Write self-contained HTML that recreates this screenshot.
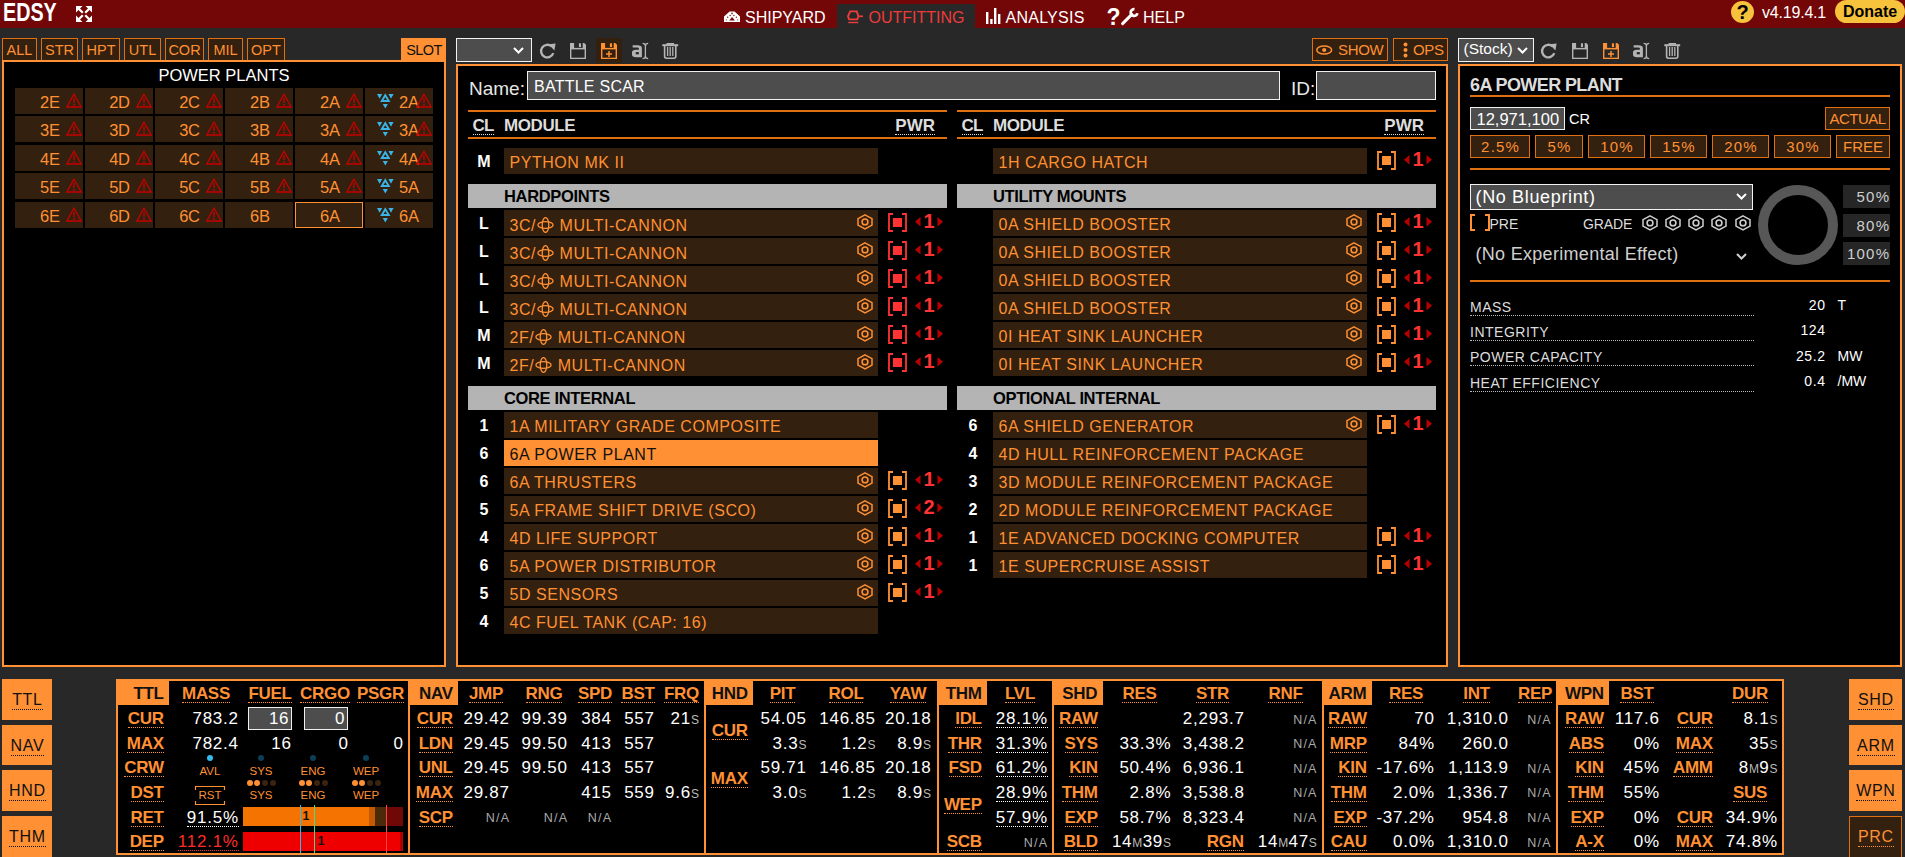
<!DOCTYPE html>
<html><head><meta charset="utf-8"><title>EDSY</title>
<style>
html,body{margin:0;padding:0;}
body{width:1905px;height:857px;overflow:hidden;position:relative;background:#282828;font-family:"Liberation Sans", sans-serif;}
.a{position:absolute;}
.t{white-space:nowrap;}
svg.a{overflow:visible;}
</style></head><body>
<div class="a" style="left:0px;top:0px;width:1905px;height:28px;background:#730606;"></div>
<div class="a t" style="left:2.5px;top:0px;font-size:25px;line-height:25px;font-weight:700;color:#fff;transform:scaleX(0.79);transform-origin:0 0;">EDSY</div>
<svg class="a" style="left:76px;top:6px;" width="16" height="16" viewBox="0 0 16 16"><g fill="#fff"><path d="M0 0 L6.5 0 L0 6.5 Z M16 0 L9.5 0 L16 6.5 Z M0 16 L6.5 16 L0 9.5 Z M16 16 L9.5 16 L16 9.5 Z"/></g><g stroke="#fff" stroke-width="2.3"><path d="M2 2 L6.8 6.8 M14 2 L9.2 6.8 M2 14 L6.8 9.2 M14 14 L9.2 9.2"/></g></svg>
<div class="a" style="left:837px;top:4px;width:138px;height:24px;background:#282828;"></div>
<svg class="a" style="left:724px;top:11px;" width="16" height="11" viewBox="0 0 16 11"><path d="M5.6 0.5 L10.6 0.5 L16 5.6 L16 11 L0 11 L0 5.6 Z" fill="#fff"/><path d="M8.1 6 L10.9 9.6 L5.3 9.6 Z" fill="#730606"/><g fill="#8a3030"><circle cx="8" cy="2.4" r="0.9"/><circle cx="6.2" cy="4.5" r="0.8"/><circle cx="9.9" cy="4.5" r="0.8"/><circle cx="3.6" cy="6.3" r="0.8"/><circle cx="12.4" cy="6.3" r="0.8"/><circle cx="2.3" cy="8.8" r="0.6"/><circle cx="13.7" cy="8.8" r="0.6"/></g></svg>
<div class="a t" style="top:10px;font-size:16px;line-height:16px;color:#fff;left:745px;">SHIPYARD</div>
<svg class="a" style="left:846px;top:9px;" width="18" height="15" viewBox="0 0 18 15"><path d="M4.2 2.4 L10.8 2.4 L12.4 7.3 L11.3 10.4 L3.1 10.4 L2 7.3 Z" fill="none" stroke="#ee3b3b" stroke-width="1.9" stroke-linejoin="miter"/><path d="M12.5 7.3 L17 7.3" stroke="#ee3b3b" stroke-width="1.7"/><path d="M2.3 13.5 L12.3 13.5" stroke="#ee3b3b" stroke-width="1.4"/></svg>
<div class="a t" style="top:10px;font-size:16px;line-height:16px;color:#ee3b3b;left:868.5px;">OUTFITTING</div>
<svg class="a" style="left:986px;top:7px;" width="15" height="17" viewBox="0 0 15 17"><g fill="#fff"><rect x="0" y="5" width="2.4" height="12"/><rect x="4.2" y="12" width="2.4" height="5"/><rect x="8" y="1" width="2.4" height="16"/><rect x="12" y="7" width="2.4" height="10"/></g></svg>
<div class="a t" style="top:10px;font-size:16px;line-height:16px;color:#fff;letter-spacing:0.25px;left:1005.5px;">ANALYSIS</div>
<div class="a t" style="top:6px;font-size:23px;line-height:23px;color:#fff;font-weight:700;left:1106.5px;">?</div>
<svg class="a" style="left:1119.5px;top:8px;" width="19" height="18" viewBox="0 0 19 18"><path d="M2.6 15.6 L11.8 6.4" stroke="#fff" stroke-width="3" stroke-linecap="round"/><path d="M17.4 5.2 A3.4 3.4 0 1 1 14.5 1.1" fill="none" stroke="#fff" stroke-width="2.7"/></svg>
<div class="a t" style="top:10px;font-size:16px;line-height:16px;color:#fff;left:1143px;">HELP</div>
<div class="a" style="left:1731px;top:1px;width:23px;height:22px;border-radius:50%;background:#f7c23c;"></div>
<div class="a t" style="top:2px;font-size:20px;line-height:20px;color:#000;font-weight:700;left:1442.5px;width:600px;text-align:center;">?</div>
<div class="a t" style="top:5px;font-size:16px;line-height:16px;color:#fff;letter-spacing:-0.2px;left:1762px;">v4.19.4.1</div>
<div class="a" style="left:1835px;top:0px;width:70px;height:23px;border-radius:11.5px;background:#f7c23c;"></div>
<div class="a t" style="top:4px;font-size:16px;line-height:16px;color:#000;font-weight:700;left:1843px;">Donate</div>
<div class="a" style="left:2px;top:38px;width:35px;height:23px;background:#33200e;border:1px solid #e0700f;box-sizing:border-box;"></div>
<div class="a t" style="top:43px;font-size:14.5px;line-height:14.5px;color:#ff9033;left:-280.5px;width:600px;text-align:center;">ALL</div>
<div class="a" style="left:41px;top:38px;width:37px;height:23px;background:#33200e;border:1px solid #e0700f;box-sizing:border-box;"></div>
<div class="a t" style="top:43px;font-size:14.5px;line-height:14.5px;color:#ff9033;left:-240.5px;width:600px;text-align:center;">STR</div>
<div class="a" style="left:82px;top:38px;width:38px;height:23px;background:#33200e;border:1px solid #e0700f;box-sizing:border-box;"></div>
<div class="a t" style="top:43px;font-size:14.5px;line-height:14.5px;color:#ff9033;left:-199.0px;width:600px;text-align:center;">HPT</div>
<div class="a" style="left:124px;top:38px;width:37px;height:23px;background:#33200e;border:1px solid #e0700f;box-sizing:border-box;"></div>
<div class="a t" style="top:43px;font-size:14.5px;line-height:14.5px;color:#ff9033;left:-157.5px;width:600px;text-align:center;">UTL</div>
<div class="a" style="left:165px;top:38px;width:39px;height:23px;background:#33200e;border:1px solid #e0700f;box-sizing:border-box;"></div>
<div class="a t" style="top:43px;font-size:14.5px;line-height:14.5px;color:#ff9033;left:-115.5px;width:600px;text-align:center;">COR</div>
<div class="a" style="left:208px;top:38px;width:35px;height:23px;background:#33200e;border:1px solid #e0700f;box-sizing:border-box;"></div>
<div class="a t" style="top:43px;font-size:14.5px;line-height:14.5px;color:#ff9033;left:-74.5px;width:600px;text-align:center;">MIL</div>
<div class="a" style="left:247px;top:38px;width:38px;height:23px;background:#33200e;border:1px solid #e0700f;box-sizing:border-box;"></div>
<div class="a t" style="top:43px;font-size:14.5px;line-height:14.5px;color:#ff9033;left:-34.0px;width:600px;text-align:center;">OPT</div>
<div class="a" style="left:401px;top:38px;width:45px;height:24px;background:#ff9033;"></div>
<div class="a t" style="top:43px;font-size:14.5px;line-height:14.5px;color:#111;letter-spacing:-0.6px;left:124px;width:600px;text-align:center;">SLOT</div>
<div class="a" style="left:2px;top:60px;width:444px;height:607px;background:#000;border:2px solid #ff9033;box-sizing:border-box;"></div>
<div class="a t" style="top:67px;font-size:16.5px;line-height:16.5px;color:#fff;left:-76px;width:600px;text-align:center;">POWER PLANTS</div>
<div class="a" style="left:15px;top:88px;width:68px;height:26px;background:#33200e;"></div>
<div class="a t" style="top:94px;font-size:16.5px;line-height:16.5px;color:#ff9033;letter-spacing:-0.3px;right:1845.30px;text-align:right;">2E</div>
<svg class="a" style="left:66px;top:93px;" width="16" height="15" viewBox="0 0 16 15"><path d="M8 1.2 L15.2 14 L0.8 14 Z" fill="none" stroke="#c80000" stroke-width="1.3" stroke-linejoin="miter"/><rect x="7.3" y="5" width="1.4" height="5" fill="#c80000"/><rect x="7.2" y="11" width="1.6" height="1.6" fill="#c80000"/></svg>
<div class="a" style="left:85px;top:88px;width:68px;height:26px;background:#33200e;"></div>
<div class="a t" style="top:94px;font-size:16.5px;line-height:16.5px;color:#ff9033;letter-spacing:-0.3px;right:1775.30px;text-align:right;">2D</div>
<svg class="a" style="left:136px;top:93px;" width="16" height="15" viewBox="0 0 16 15"><path d="M8 1.2 L15.2 14 L0.8 14 Z" fill="none" stroke="#c80000" stroke-width="1.3" stroke-linejoin="miter"/><rect x="7.3" y="5" width="1.4" height="5" fill="#c80000"/><rect x="7.2" y="11" width="1.6" height="1.6" fill="#c80000"/></svg>
<div class="a" style="left:155px;top:88px;width:68px;height:26px;background:#33200e;"></div>
<div class="a t" style="top:94px;font-size:16.5px;line-height:16.5px;color:#ff9033;letter-spacing:-0.3px;right:1705.30px;text-align:right;">2C</div>
<svg class="a" style="left:206px;top:93px;" width="16" height="15" viewBox="0 0 16 15"><path d="M8 1.2 L15.2 14 L0.8 14 Z" fill="none" stroke="#c80000" stroke-width="1.3" stroke-linejoin="miter"/><rect x="7.3" y="5" width="1.4" height="5" fill="#c80000"/><rect x="7.2" y="11" width="1.6" height="1.6" fill="#c80000"/></svg>
<div class="a" style="left:225px;top:88px;width:68px;height:26px;background:#33200e;"></div>
<div class="a t" style="top:94px;font-size:16.5px;line-height:16.5px;color:#ff9033;letter-spacing:-0.3px;right:1635.30px;text-align:right;">2B</div>
<svg class="a" style="left:276px;top:93px;" width="16" height="15" viewBox="0 0 16 15"><path d="M8 1.2 L15.2 14 L0.8 14 Z" fill="none" stroke="#c80000" stroke-width="1.3" stroke-linejoin="miter"/><rect x="7.3" y="5" width="1.4" height="5" fill="#c80000"/><rect x="7.2" y="11" width="1.6" height="1.6" fill="#c80000"/></svg>
<div class="a" style="left:295px;top:88px;width:68px;height:26px;background:#33200e;"></div>
<div class="a t" style="top:94px;font-size:16.5px;line-height:16.5px;color:#ff9033;letter-spacing:-0.3px;right:1565.30px;text-align:right;">2A</div>
<svg class="a" style="left:346px;top:93px;" width="16" height="15" viewBox="0 0 16 15"><path d="M8 1.2 L15.2 14 L0.8 14 Z" fill="none" stroke="#c80000" stroke-width="1.3" stroke-linejoin="miter"/><rect x="7.3" y="5" width="1.4" height="5" fill="#c80000"/><rect x="7.2" y="11" width="1.6" height="1.6" fill="#c80000"/></svg>
<div class="a" style="left:365px;top:88px;width:68px;height:26px;background:#33200e;"></div>
<svg class="a" style="left:377px;top:94px;" width="17" height="15" viewBox="0 0 17 15"><path d="M0 0 L5.2 0 L2.6 4.8 Z M11.4 0 L16.6 0 L14 4.8 Z M5.7 10 L10.9 10 L8.3 14.5 Z" fill="#3ab4e6"/><path d="M8.3 1.2 L11.8 7 L4.8 7 Z" fill="none" stroke="#3ab4e6" stroke-width="1.9" stroke-linejoin="miter"/></svg>
<div class="a t" style="top:94px;font-size:16.5px;line-height:16.5px;color:#ff9033;letter-spacing:-0.3px;left:399px;">2A</div>
<svg class="a" style="left:416px;top:93px;" width="16" height="15" viewBox="0 0 16 15"><path d="M8 1.2 L15.2 14 L0.8 14 Z" fill="none" stroke="#c80000" stroke-width="1.3" stroke-linejoin="miter"/><rect x="7.3" y="5" width="1.4" height="5" fill="#c80000"/><rect x="7.2" y="11" width="1.6" height="1.6" fill="#c80000"/></svg>
<div class="a" style="left:15px;top:116px;width:68px;height:26px;background:#33200e;"></div>
<div class="a t" style="top:122px;font-size:16.5px;line-height:16.5px;color:#ff9033;letter-spacing:-0.3px;right:1845.30px;text-align:right;">3E</div>
<svg class="a" style="left:66px;top:121px;" width="16" height="15" viewBox="0 0 16 15"><path d="M8 1.2 L15.2 14 L0.8 14 Z" fill="none" stroke="#c80000" stroke-width="1.3" stroke-linejoin="miter"/><rect x="7.3" y="5" width="1.4" height="5" fill="#c80000"/><rect x="7.2" y="11" width="1.6" height="1.6" fill="#c80000"/></svg>
<div class="a" style="left:85px;top:116px;width:68px;height:26px;background:#33200e;"></div>
<div class="a t" style="top:122px;font-size:16.5px;line-height:16.5px;color:#ff9033;letter-spacing:-0.3px;right:1775.30px;text-align:right;">3D</div>
<svg class="a" style="left:136px;top:121px;" width="16" height="15" viewBox="0 0 16 15"><path d="M8 1.2 L15.2 14 L0.8 14 Z" fill="none" stroke="#c80000" stroke-width="1.3" stroke-linejoin="miter"/><rect x="7.3" y="5" width="1.4" height="5" fill="#c80000"/><rect x="7.2" y="11" width="1.6" height="1.6" fill="#c80000"/></svg>
<div class="a" style="left:155px;top:116px;width:68px;height:26px;background:#33200e;"></div>
<div class="a t" style="top:122px;font-size:16.5px;line-height:16.5px;color:#ff9033;letter-spacing:-0.3px;right:1705.30px;text-align:right;">3C</div>
<svg class="a" style="left:206px;top:121px;" width="16" height="15" viewBox="0 0 16 15"><path d="M8 1.2 L15.2 14 L0.8 14 Z" fill="none" stroke="#c80000" stroke-width="1.3" stroke-linejoin="miter"/><rect x="7.3" y="5" width="1.4" height="5" fill="#c80000"/><rect x="7.2" y="11" width="1.6" height="1.6" fill="#c80000"/></svg>
<div class="a" style="left:225px;top:116px;width:68px;height:26px;background:#33200e;"></div>
<div class="a t" style="top:122px;font-size:16.5px;line-height:16.5px;color:#ff9033;letter-spacing:-0.3px;right:1635.30px;text-align:right;">3B</div>
<svg class="a" style="left:276px;top:121px;" width="16" height="15" viewBox="0 0 16 15"><path d="M8 1.2 L15.2 14 L0.8 14 Z" fill="none" stroke="#c80000" stroke-width="1.3" stroke-linejoin="miter"/><rect x="7.3" y="5" width="1.4" height="5" fill="#c80000"/><rect x="7.2" y="11" width="1.6" height="1.6" fill="#c80000"/></svg>
<div class="a" style="left:295px;top:116px;width:68px;height:26px;background:#33200e;"></div>
<div class="a t" style="top:122px;font-size:16.5px;line-height:16.5px;color:#ff9033;letter-spacing:-0.3px;right:1565.30px;text-align:right;">3A</div>
<svg class="a" style="left:346px;top:121px;" width="16" height="15" viewBox="0 0 16 15"><path d="M8 1.2 L15.2 14 L0.8 14 Z" fill="none" stroke="#c80000" stroke-width="1.3" stroke-linejoin="miter"/><rect x="7.3" y="5" width="1.4" height="5" fill="#c80000"/><rect x="7.2" y="11" width="1.6" height="1.6" fill="#c80000"/></svg>
<div class="a" style="left:365px;top:116px;width:68px;height:26px;background:#33200e;"></div>
<svg class="a" style="left:377px;top:122px;" width="17" height="15" viewBox="0 0 17 15"><path d="M0 0 L5.2 0 L2.6 4.8 Z M11.4 0 L16.6 0 L14 4.8 Z M5.7 10 L10.9 10 L8.3 14.5 Z" fill="#3ab4e6"/><path d="M8.3 1.2 L11.8 7 L4.8 7 Z" fill="none" stroke="#3ab4e6" stroke-width="1.9" stroke-linejoin="miter"/></svg>
<div class="a t" style="top:122px;font-size:16.5px;line-height:16.5px;color:#ff9033;letter-spacing:-0.3px;left:399px;">3A</div>
<svg class="a" style="left:416px;top:121px;" width="16" height="15" viewBox="0 0 16 15"><path d="M8 1.2 L15.2 14 L0.8 14 Z" fill="none" stroke="#c80000" stroke-width="1.3" stroke-linejoin="miter"/><rect x="7.3" y="5" width="1.4" height="5" fill="#c80000"/><rect x="7.2" y="11" width="1.6" height="1.6" fill="#c80000"/></svg>
<div class="a" style="left:15px;top:145px;width:68px;height:26px;background:#33200e;"></div>
<div class="a t" style="top:151px;font-size:16.5px;line-height:16.5px;color:#ff9033;letter-spacing:-0.3px;right:1845.30px;text-align:right;">4E</div>
<svg class="a" style="left:66px;top:150px;" width="16" height="15" viewBox="0 0 16 15"><path d="M8 1.2 L15.2 14 L0.8 14 Z" fill="none" stroke="#c80000" stroke-width="1.3" stroke-linejoin="miter"/><rect x="7.3" y="5" width="1.4" height="5" fill="#c80000"/><rect x="7.2" y="11" width="1.6" height="1.6" fill="#c80000"/></svg>
<div class="a" style="left:85px;top:145px;width:68px;height:26px;background:#33200e;"></div>
<div class="a t" style="top:151px;font-size:16.5px;line-height:16.5px;color:#ff9033;letter-spacing:-0.3px;right:1775.30px;text-align:right;">4D</div>
<svg class="a" style="left:136px;top:150px;" width="16" height="15" viewBox="0 0 16 15"><path d="M8 1.2 L15.2 14 L0.8 14 Z" fill="none" stroke="#c80000" stroke-width="1.3" stroke-linejoin="miter"/><rect x="7.3" y="5" width="1.4" height="5" fill="#c80000"/><rect x="7.2" y="11" width="1.6" height="1.6" fill="#c80000"/></svg>
<div class="a" style="left:155px;top:145px;width:68px;height:26px;background:#33200e;"></div>
<div class="a t" style="top:151px;font-size:16.5px;line-height:16.5px;color:#ff9033;letter-spacing:-0.3px;right:1705.30px;text-align:right;">4C</div>
<svg class="a" style="left:206px;top:150px;" width="16" height="15" viewBox="0 0 16 15"><path d="M8 1.2 L15.2 14 L0.8 14 Z" fill="none" stroke="#c80000" stroke-width="1.3" stroke-linejoin="miter"/><rect x="7.3" y="5" width="1.4" height="5" fill="#c80000"/><rect x="7.2" y="11" width="1.6" height="1.6" fill="#c80000"/></svg>
<div class="a" style="left:225px;top:145px;width:68px;height:26px;background:#33200e;"></div>
<div class="a t" style="top:151px;font-size:16.5px;line-height:16.5px;color:#ff9033;letter-spacing:-0.3px;right:1635.30px;text-align:right;">4B</div>
<svg class="a" style="left:276px;top:150px;" width="16" height="15" viewBox="0 0 16 15"><path d="M8 1.2 L15.2 14 L0.8 14 Z" fill="none" stroke="#c80000" stroke-width="1.3" stroke-linejoin="miter"/><rect x="7.3" y="5" width="1.4" height="5" fill="#c80000"/><rect x="7.2" y="11" width="1.6" height="1.6" fill="#c80000"/></svg>
<div class="a" style="left:295px;top:145px;width:68px;height:26px;background:#33200e;"></div>
<div class="a t" style="top:151px;font-size:16.5px;line-height:16.5px;color:#ff9033;letter-spacing:-0.3px;right:1565.30px;text-align:right;">4A</div>
<svg class="a" style="left:346px;top:150px;" width="16" height="15" viewBox="0 0 16 15"><path d="M8 1.2 L15.2 14 L0.8 14 Z" fill="none" stroke="#c80000" stroke-width="1.3" stroke-linejoin="miter"/><rect x="7.3" y="5" width="1.4" height="5" fill="#c80000"/><rect x="7.2" y="11" width="1.6" height="1.6" fill="#c80000"/></svg>
<div class="a" style="left:365px;top:145px;width:68px;height:26px;background:#33200e;"></div>
<svg class="a" style="left:377px;top:151px;" width="17" height="15" viewBox="0 0 17 15"><path d="M0 0 L5.2 0 L2.6 4.8 Z M11.4 0 L16.6 0 L14 4.8 Z M5.7 10 L10.9 10 L8.3 14.5 Z" fill="#3ab4e6"/><path d="M8.3 1.2 L11.8 7 L4.8 7 Z" fill="none" stroke="#3ab4e6" stroke-width="1.9" stroke-linejoin="miter"/></svg>
<div class="a t" style="top:151px;font-size:16.5px;line-height:16.5px;color:#ff9033;letter-spacing:-0.3px;left:399px;">4A</div>
<svg class="a" style="left:416px;top:150px;" width="16" height="15" viewBox="0 0 16 15"><path d="M8 1.2 L15.2 14 L0.8 14 Z" fill="none" stroke="#c80000" stroke-width="1.3" stroke-linejoin="miter"/><rect x="7.3" y="5" width="1.4" height="5" fill="#c80000"/><rect x="7.2" y="11" width="1.6" height="1.6" fill="#c80000"/></svg>
<div class="a" style="left:15px;top:173px;width:68px;height:26px;background:#33200e;"></div>
<div class="a t" style="top:179px;font-size:16.5px;line-height:16.5px;color:#ff9033;letter-spacing:-0.3px;right:1845.30px;text-align:right;">5E</div>
<svg class="a" style="left:66px;top:178px;" width="16" height="15" viewBox="0 0 16 15"><path d="M8 1.2 L15.2 14 L0.8 14 Z" fill="none" stroke="#c80000" stroke-width="1.3" stroke-linejoin="miter"/><rect x="7.3" y="5" width="1.4" height="5" fill="#c80000"/><rect x="7.2" y="11" width="1.6" height="1.6" fill="#c80000"/></svg>
<div class="a" style="left:85px;top:173px;width:68px;height:26px;background:#33200e;"></div>
<div class="a t" style="top:179px;font-size:16.5px;line-height:16.5px;color:#ff9033;letter-spacing:-0.3px;right:1775.30px;text-align:right;">5D</div>
<svg class="a" style="left:136px;top:178px;" width="16" height="15" viewBox="0 0 16 15"><path d="M8 1.2 L15.2 14 L0.8 14 Z" fill="none" stroke="#c80000" stroke-width="1.3" stroke-linejoin="miter"/><rect x="7.3" y="5" width="1.4" height="5" fill="#c80000"/><rect x="7.2" y="11" width="1.6" height="1.6" fill="#c80000"/></svg>
<div class="a" style="left:155px;top:173px;width:68px;height:26px;background:#33200e;"></div>
<div class="a t" style="top:179px;font-size:16.5px;line-height:16.5px;color:#ff9033;letter-spacing:-0.3px;right:1705.30px;text-align:right;">5C</div>
<svg class="a" style="left:206px;top:178px;" width="16" height="15" viewBox="0 0 16 15"><path d="M8 1.2 L15.2 14 L0.8 14 Z" fill="none" stroke="#c80000" stroke-width="1.3" stroke-linejoin="miter"/><rect x="7.3" y="5" width="1.4" height="5" fill="#c80000"/><rect x="7.2" y="11" width="1.6" height="1.6" fill="#c80000"/></svg>
<div class="a" style="left:225px;top:173px;width:68px;height:26px;background:#33200e;"></div>
<div class="a t" style="top:179px;font-size:16.5px;line-height:16.5px;color:#ff9033;letter-spacing:-0.3px;right:1635.30px;text-align:right;">5B</div>
<svg class="a" style="left:276px;top:178px;" width="16" height="15" viewBox="0 0 16 15"><path d="M8 1.2 L15.2 14 L0.8 14 Z" fill="none" stroke="#c80000" stroke-width="1.3" stroke-linejoin="miter"/><rect x="7.3" y="5" width="1.4" height="5" fill="#c80000"/><rect x="7.2" y="11" width="1.6" height="1.6" fill="#c80000"/></svg>
<div class="a" style="left:295px;top:173px;width:68px;height:26px;background:#33200e;"></div>
<div class="a t" style="top:179px;font-size:16.5px;line-height:16.5px;color:#ff9033;letter-spacing:-0.3px;right:1565.30px;text-align:right;">5A</div>
<svg class="a" style="left:346px;top:178px;" width="16" height="15" viewBox="0 0 16 15"><path d="M8 1.2 L15.2 14 L0.8 14 Z" fill="none" stroke="#c80000" stroke-width="1.3" stroke-linejoin="miter"/><rect x="7.3" y="5" width="1.4" height="5" fill="#c80000"/><rect x="7.2" y="11" width="1.6" height="1.6" fill="#c80000"/></svg>
<div class="a" style="left:365px;top:173px;width:68px;height:26px;background:#33200e;"></div>
<svg class="a" style="left:377px;top:179px;" width="17" height="15" viewBox="0 0 17 15"><path d="M0 0 L5.2 0 L2.6 4.8 Z M11.4 0 L16.6 0 L14 4.8 Z M5.7 10 L10.9 10 L8.3 14.5 Z" fill="#3ab4e6"/><path d="M8.3 1.2 L11.8 7 L4.8 7 Z" fill="none" stroke="#3ab4e6" stroke-width="1.9" stroke-linejoin="miter"/></svg>
<div class="a t" style="top:179px;font-size:16.5px;line-height:16.5px;color:#ff9033;letter-spacing:-0.3px;left:399px;">5A</div>
<div class="a" style="left:15px;top:202px;width:68px;height:26px;background:#33200e;"></div>
<div class="a t" style="top:208px;font-size:16.5px;line-height:16.5px;color:#ff9033;letter-spacing:-0.3px;right:1845.30px;text-align:right;">6E</div>
<svg class="a" style="left:66px;top:207px;" width="16" height="15" viewBox="0 0 16 15"><path d="M8 1.2 L15.2 14 L0.8 14 Z" fill="none" stroke="#c80000" stroke-width="1.3" stroke-linejoin="miter"/><rect x="7.3" y="5" width="1.4" height="5" fill="#c80000"/><rect x="7.2" y="11" width="1.6" height="1.6" fill="#c80000"/></svg>
<div class="a" style="left:85px;top:202px;width:68px;height:26px;background:#33200e;"></div>
<div class="a t" style="top:208px;font-size:16.5px;line-height:16.5px;color:#ff9033;letter-spacing:-0.3px;right:1775.30px;text-align:right;">6D</div>
<svg class="a" style="left:136px;top:207px;" width="16" height="15" viewBox="0 0 16 15"><path d="M8 1.2 L15.2 14 L0.8 14 Z" fill="none" stroke="#c80000" stroke-width="1.3" stroke-linejoin="miter"/><rect x="7.3" y="5" width="1.4" height="5" fill="#c80000"/><rect x="7.2" y="11" width="1.6" height="1.6" fill="#c80000"/></svg>
<div class="a" style="left:155px;top:202px;width:68px;height:26px;background:#33200e;"></div>
<div class="a t" style="top:208px;font-size:16.5px;line-height:16.5px;color:#ff9033;letter-spacing:-0.3px;right:1705.30px;text-align:right;">6C</div>
<svg class="a" style="left:206px;top:207px;" width="16" height="15" viewBox="0 0 16 15"><path d="M8 1.2 L15.2 14 L0.8 14 Z" fill="none" stroke="#c80000" stroke-width="1.3" stroke-linejoin="miter"/><rect x="7.3" y="5" width="1.4" height="5" fill="#c80000"/><rect x="7.2" y="11" width="1.6" height="1.6" fill="#c80000"/></svg>
<div class="a" style="left:225px;top:202px;width:68px;height:26px;background:#33200e;"></div>
<div class="a t" style="top:208px;font-size:16.5px;line-height:16.5px;color:#ff9033;letter-spacing:-0.3px;right:1635.30px;text-align:right;">6B</div>
<div class="a" style="left:295px;top:202px;width:68px;height:26px;background:#33200e;border:1px solid #ff9033;box-sizing:border-box;"></div>
<div class="a t" style="top:208px;font-size:16.5px;line-height:16.5px;color:#ff9033;letter-spacing:-0.3px;right:1565.30px;text-align:right;">6A</div>
<div class="a" style="left:365px;top:202px;width:68px;height:26px;background:#33200e;"></div>
<svg class="a" style="left:377px;top:208px;" width="17" height="15" viewBox="0 0 17 15"><path d="M0 0 L5.2 0 L2.6 4.8 Z M11.4 0 L16.6 0 L14 4.8 Z M5.7 10 L10.9 10 L8.3 14.5 Z" fill="#3ab4e6"/><path d="M8.3 1.2 L11.8 7 L4.8 7 Z" fill="none" stroke="#3ab4e6" stroke-width="1.9" stroke-linejoin="miter"/></svg>
<div class="a t" style="top:208px;font-size:16.5px;line-height:16.5px;color:#ff9033;letter-spacing:-0.3px;left:399px;">6A</div>
<div class="a" style="left:456px;top:38px;width:76px;height:24px;box-sizing:border-box;border:1px solid #f2f2f2;background:#4d4d4d;"></div>
<svg class="a" style="left:513px;top:47px;" width="11" height="7" viewBox="0 0 11 7"><path d="M1 1 L5.5 5.5 L10 1" fill="none" stroke="#fff" stroke-width="2"/></svg>
<svg class="a" style="left:540px;top:43px;" width="16" height="16" viewBox="0 0 16 16"><path d="M13.3 10.2 A6.3 6.3 0 1 1 11.6 3.4" fill="none" stroke="#b4b4b4" stroke-width="2.3"/><path d="M8.6 1.2 L15.6 0.6 L14.4 7.4 Z" fill="#b4b4b4"/></svg>
<svg class="a" style="left:570px;top:43px;" width="16" height="16" viewBox="0 0 16 16"><path d="M0 0 L14.2 0 L16 1.8 L16 16 L0 16 Z" fill="#b4b4b4"/><rect x="1.4" y="6.4" width="13.2" height="8.3" fill="#282828"/><rect x="4.1" y="0" width="8.6" height="4.9" fill="#282828"/><rect x="8.9" y="0.3" width="2.1" height="3.8" fill="#b4b4b4"/></svg>
<div class="a" style="left:596px;top:38px;width:26px;height:25px;background:#33200e;"></div>
<svg class="a" style="left:601px;top:43px;" width="16" height="16" viewBox="0 0 16 16"><path d="M0 0 L14.2 0 L16 1.8 L16 16 L0 16 Z" fill="#ff9033"/><rect x="1.4" y="6.4" width="13.2" height="8.3" fill="#33200e"/><rect x="4.1" y="0" width="8.6" height="4.9" fill="#33200e"/><rect x="8.9" y="0.3" width="2.1" height="3.8" fill="#ff9033"/><path d="M8 8 L8 14 M5 11 L11 11" stroke="#ff9033" stroke-width="1.5"/></svg>
<svg class="a" style="left:632px;top:43px;" width="17" height="17" viewBox="0 0 17 17"><g transform="scale(1.32,1)"><path d="M0.5 2.3 L4 2.3 Q7.5 2.3 7.5 5 L7.5 14.2 L3 14.2 Q0 14.2 0 11.6 L0 9.6 Q0 6.8 3 6.8 L5.2 6.8 L5.2 5.2 Q5.2 4.4 4 4.4 L0.5 4.4 Z" fill="#b4b4b4"/><rect x="2.8" y="9.1" width="2.4" height="2.2" fill="#282828"/></g><path d="M10.6 0.4 Q13.4 0.4 13.4 3 L13.4 13 Q13.4 15.6 10.6 15.6 M16.2 0.4 Q13.4 0.4 13.4 3 M16.2 15.6 Q13.4 15.6 13.4 13" fill="none" stroke="#b4b4b4" stroke-width="1.3"/></svg>
<svg class="a" style="left:662px;top:43px;" width="17" height="16" viewBox="0 0 17 16"><path d="M0.3 2.2 L16.2 2.2" stroke="#b4b4b4" stroke-width="2"/><rect x="4.5" y="0" width="7.5" height="1.8" fill="#b4b4b4"/><path d="M2.6 3 L2.6 13.6 Q2.6 15.2 4.4 15.2 L12 15.2 Q13.8 15.2 13.8 13.6 L13.8 3" fill="none" stroke="#b4b4b4" stroke-width="1.6"/><path d="M5.6 4 L5.6 13 M8.2 4 L8.2 13 M10.8 4 L10.8 13" stroke="#b4b4b4" stroke-width="1.3"/></svg>
<div class="a" style="left:1312px;top:38px;width:76px;height:23px;background:#33200e;border:1px solid #e0700f;box-sizing:border-box;"></div>
<svg class="a" style="left:1316px;top:45px;" width="17" height="10" viewBox="0 0 17 10"><ellipse cx="8.2" cy="5" rx="7.4" ry="4.1" fill="none" stroke="#ff9033" stroke-width="1.5"/><circle cx="8.2" cy="5" r="2.1" fill="#ff9033"/></svg>
<div class="a t" style="top:42px;font-size:15px;line-height:15px;color:#ff9033;letter-spacing:-0.3px;left:1338px;">SHOW</div>
<div class="a" style="left:1393px;top:38px;width:55px;height:23px;background:#33200e;border:1px solid #e0700f;box-sizing:border-box;"></div>
<svg class="a" style="left:1403px;top:42px;" width="5" height="16" viewBox="0 0 5 16"><circle cx="2.5" cy="2.5" r="2" fill="#ff9033"/><circle cx="2.5" cy="8" r="2" fill="#ff9033"/><circle cx="2.5" cy="13.5" r="2" fill="#ff9033"/></svg>
<div class="a t" style="top:42px;font-size:15px;line-height:15px;color:#ff9033;letter-spacing:-0.3px;left:1413px;">OPS</div>
<div class="a" style="left:1458px;top:38px;width:76px;height:24px;box-sizing:border-box;border:1px solid #f2f2f2;background:#4d4d4d;"></div>
<div class="a t" style="top:41px;font-size:15.5px;line-height:15.5px;color:#fff;left:1463.5px;">(Stock)</div>
<svg class="a" style="left:1517px;top:46.5px;" width="11" height="7" viewBox="0 0 11 7"><path d="M1 1 L5.5 5.5 L10 1" fill="none" stroke="#fff" stroke-width="2"/></svg>
<svg class="a" style="left:1541px;top:43px;" width="16" height="16" viewBox="0 0 16 16"><path d="M13.3 10.2 A6.3 6.3 0 1 1 11.6 3.4" fill="none" stroke="#b4b4b4" stroke-width="2.3"/><path d="M8.6 1.2 L15.6 0.6 L14.4 7.4 Z" fill="#b4b4b4"/></svg>
<svg class="a" style="left:1572px;top:43px;" width="16" height="16" viewBox="0 0 16 16"><path d="M0 0 L14.2 0 L16 1.8 L16 16 L0 16 Z" fill="#b4b4b4"/><rect x="1.4" y="6.4" width="13.2" height="8.3" fill="#282828"/><rect x="4.1" y="0" width="8.6" height="4.9" fill="#282828"/><rect x="8.9" y="0.3" width="2.1" height="3.8" fill="#b4b4b4"/></svg>
<svg class="a" style="left:1603px;top:43px;" width="16" height="16" viewBox="0 0 16 16"><path d="M0 0 L14.2 0 L16 1.8 L16 16 L0 16 Z" fill="#ff9033"/><rect x="1.4" y="6.4" width="13.2" height="8.3" fill="#282828"/><rect x="4.1" y="0" width="8.6" height="4.9" fill="#282828"/><rect x="8.9" y="0.3" width="2.1" height="3.8" fill="#ff9033"/><path d="M8 8 L8 14 M5 11 L11 11" stroke="#ff9033" stroke-width="1.5"/></svg>
<svg class="a" style="left:1633px;top:43px;" width="17" height="17" viewBox="0 0 17 17"><g transform="scale(1.32,1)"><path d="M0.5 2.3 L4 2.3 Q7.5 2.3 7.5 5 L7.5 14.2 L3 14.2 Q0 14.2 0 11.6 L0 9.6 Q0 6.8 3 6.8 L5.2 6.8 L5.2 5.2 Q5.2 4.4 4 4.4 L0.5 4.4 Z" fill="#b4b4b4"/><rect x="2.8" y="9.1" width="2.4" height="2.2" fill="#282828"/></g><path d="M10.6 0.4 Q13.4 0.4 13.4 3 L13.4 13 Q13.4 15.6 10.6 15.6 M16.2 0.4 Q13.4 0.4 13.4 3 M16.2 15.6 Q13.4 15.6 13.4 13" fill="none" stroke="#b4b4b4" stroke-width="1.3"/></svg>
<svg class="a" style="left:1664px;top:43px;" width="17" height="16" viewBox="0 0 17 16"><path d="M0.3 2.2 L16.2 2.2" stroke="#b4b4b4" stroke-width="2"/><rect x="4.5" y="0" width="7.5" height="1.8" fill="#b4b4b4"/><path d="M2.6 3 L2.6 13.6 Q2.6 15.2 4.4 15.2 L12 15.2 Q13.8 15.2 13.8 13.6 L13.8 3" fill="none" stroke="#b4b4b4" stroke-width="1.6"/><path d="M5.6 4 L5.6 13 M8.2 4 L8.2 13 M10.8 4 L10.8 13" stroke="#b4b4b4" stroke-width="1.3"/></svg>
<div class="a" style="left:456px;top:64px;width:992px;height:603px;background:#000;border:2px solid #ff9033;box-sizing:border-box;"></div>
<div class="a t" style="top:79px;font-size:19px;line-height:19px;color:#e6e6e6;left:469px;">Name:</div>
<div class="a" style="left:527px;top:71px;width:753px;height:29px;background:#4d4d4d;border:1px solid #f0f0f0;box-sizing:border-box;"></div>
<div class="a t" style="top:79px;font-size:16px;line-height:16px;color:#fff;letter-spacing:0.25px;left:534px;">BATTLE SCAR</div>
<div class="a t" style="top:79px;font-size:19px;line-height:19px;color:#e6e6e6;left:1291px;">ID:</div>
<div class="a" style="left:1316px;top:71px;width:120px;height:29px;background:#4d4d4d;border:1px solid #f0f0f0;box-sizing:border-box;"></div>
<div class="a" style="left:468px;top:110px;width:479px;height:2px;background:#e0700f;"></div>
<div class="a" style="left:468px;top:137px;width:479px;height:2px;background:#e0700f;"></div>
<div class="a t" style="top:117px;font-size:17px;line-height:17px;color:#ddd;font-weight:700;letter-spacing:-0.8px;left:472.5px;"><span style="display:inline-block;border-bottom:1px dotted #ddd;padding-bottom:0px">CL</span></div>
<div class="a t" style="top:117px;font-size:17px;line-height:17px;color:#ddd;font-weight:700;letter-spacing:-0.4px;left:504px;">MODULE</div>
<div class="a t" style="top:117px;font-size:17px;line-height:17px;color:#ddd;font-weight:700;right:970.00px;text-align:right;"><span style="display:inline-block;border-bottom:1px dotted #ddd;padding-bottom:0px">PWR</span></div>
<div class="a t" style="top:154px;font-size:16px;line-height:16px;color:#fff;font-weight:700;left:184px;width:600px;text-align:center;">M</div>
<div class="a" style="left:504px;top:148px;width:374px;height:26px;background:#33200e;"></div>
<div class="a t" style="top:155px;font-size:16px;line-height:16px;color:#ff9033;letter-spacing:0.55px;left:509.5px;">PYTHON MK II</div>
<div class="a" style="left:468px;top:184px;width:479px;height:24px;background:#b4b4b4;"></div>
<div class="a t" style="top:188px;font-size:16.5px;line-height:16.5px;color:#000;font-weight:700;letter-spacing:-0.35px;left:504px;">HARDPOINTS</div>
<div class="a t" style="top:216px;font-size:16px;line-height:16px;color:#fff;font-weight:700;left:184px;width:600px;text-align:center;">L</div>
<div class="a" style="left:504px;top:210px;width:374px;height:26px;background:#33200e;"></div>
<div class="a t" style="top:217px;font-size:16px;line-height:16px;color:#ff9033;letter-spacing:0.55px;left:509.5px;">3C<span style="letter-spacing:0">/</span><svg width="17" height="16" viewBox="0 0 17 16" style="vertical-align:-2.5px;margin:0 6px 0 1px"><ellipse cx="8.5" cy="8" rx="7.6" ry="3.3" fill="none" stroke="#ff9033" stroke-width="1.3"/><ellipse cx="8.5" cy="8" rx="3.3" ry="7.4" fill="none" stroke="#ff9033" stroke-width="1.3"/></svg>MULTI-CANNON</div>
<svg class="a" style="left:857.2px;top:214.2px;" width="16" height="16" viewBox="0 0 16 16"><path d="M8 0.9 L15 4.6 L15 11.1 L8 14.9 L1 11.1 L1 4.6 Z" fill="none" stroke="#ff9033" stroke-width="1.5"/><circle cx="8" cy="7.9" r="2.9" fill="none" stroke="#ff9033" stroke-width="1.6"/></svg>
<svg class="a" style="left:888px;top:212.6px;" width="19" height="19" viewBox="0 0 19 19"><path d="M5 1 L1 1 L1 18 L5 18 M14 1 L18 1 L18 18 L14 18" fill="none" stroke="#ff3333" stroke-width="1.8"/><rect x="5" y="5" width="9" height="9" fill="#ff3333"/></svg>
<svg class="a" style="left:915px;top:217.0px;" width="6" height="10" viewBox="0 0 6 10"><path d="M5.5 0 L0 4.7 L5.5 9.4 Z" fill="#b80000"/></svg>
<div class="a t" style="top:211px;font-size:20px;line-height:20px;color:#ff3333;font-weight:700;left:629px;width:600px;text-align:center;">1</div>
<svg class="a" style="left:937px;top:217.0px;" width="6" height="10" viewBox="0 0 6 10"><path d="M0.5 0 L6 4.7 L0.5 9.4 Z" fill="#b80000"/></svg>
<div class="a t" style="top:244px;font-size:16px;line-height:16px;color:#fff;font-weight:700;left:184px;width:600px;text-align:center;">L</div>
<div class="a" style="left:504px;top:238px;width:374px;height:26px;background:#33200e;"></div>
<div class="a t" style="top:245px;font-size:16px;line-height:16px;color:#ff9033;letter-spacing:0.55px;left:509.5px;">3C<span style="letter-spacing:0">/</span><svg width="17" height="16" viewBox="0 0 17 16" style="vertical-align:-2.5px;margin:0 6px 0 1px"><ellipse cx="8.5" cy="8" rx="7.6" ry="3.3" fill="none" stroke="#ff9033" stroke-width="1.3"/><ellipse cx="8.5" cy="8" rx="3.3" ry="7.4" fill="none" stroke="#ff9033" stroke-width="1.3"/></svg>MULTI-CANNON</div>
<svg class="a" style="left:857.2px;top:242.2px;" width="16" height="16" viewBox="0 0 16 16"><path d="M8 0.9 L15 4.6 L15 11.1 L8 14.9 L1 11.1 L1 4.6 Z" fill="none" stroke="#ff9033" stroke-width="1.5"/><circle cx="8" cy="7.9" r="2.9" fill="none" stroke="#ff9033" stroke-width="1.6"/></svg>
<svg class="a" style="left:888px;top:240.6px;" width="19" height="19" viewBox="0 0 19 19"><path d="M5 1 L1 1 L1 18 L5 18 M14 1 L18 1 L18 18 L14 18" fill="none" stroke="#ff3333" stroke-width="1.8"/><rect x="5" y="5" width="9" height="9" fill="#ff3333"/></svg>
<svg class="a" style="left:915px;top:245.0px;" width="6" height="10" viewBox="0 0 6 10"><path d="M5.5 0 L0 4.7 L5.5 9.4 Z" fill="#b80000"/></svg>
<div class="a t" style="top:239px;font-size:20px;line-height:20px;color:#ff3333;font-weight:700;left:629px;width:600px;text-align:center;">1</div>
<svg class="a" style="left:937px;top:245.0px;" width="6" height="10" viewBox="0 0 6 10"><path d="M0.5 0 L6 4.7 L0.5 9.4 Z" fill="#b80000"/></svg>
<div class="a t" style="top:272px;font-size:16px;line-height:16px;color:#fff;font-weight:700;left:184px;width:600px;text-align:center;">L</div>
<div class="a" style="left:504px;top:266px;width:374px;height:26px;background:#33200e;"></div>
<div class="a t" style="top:273px;font-size:16px;line-height:16px;color:#ff9033;letter-spacing:0.55px;left:509.5px;">3C<span style="letter-spacing:0">/</span><svg width="17" height="16" viewBox="0 0 17 16" style="vertical-align:-2.5px;margin:0 6px 0 1px"><ellipse cx="8.5" cy="8" rx="7.6" ry="3.3" fill="none" stroke="#ff9033" stroke-width="1.3"/><ellipse cx="8.5" cy="8" rx="3.3" ry="7.4" fill="none" stroke="#ff9033" stroke-width="1.3"/></svg>MULTI-CANNON</div>
<svg class="a" style="left:857.2px;top:270.2px;" width="16" height="16" viewBox="0 0 16 16"><path d="M8 0.9 L15 4.6 L15 11.1 L8 14.9 L1 11.1 L1 4.6 Z" fill="none" stroke="#ff9033" stroke-width="1.5"/><circle cx="8" cy="7.9" r="2.9" fill="none" stroke="#ff9033" stroke-width="1.6"/></svg>
<svg class="a" style="left:888px;top:268.6px;" width="19" height="19" viewBox="0 0 19 19"><path d="M5 1 L1 1 L1 18 L5 18 M14 1 L18 1 L18 18 L14 18" fill="none" stroke="#ff3333" stroke-width="1.8"/><rect x="5" y="5" width="9" height="9" fill="#ff3333"/></svg>
<svg class="a" style="left:915px;top:273.0px;" width="6" height="10" viewBox="0 0 6 10"><path d="M5.5 0 L0 4.7 L5.5 9.4 Z" fill="#b80000"/></svg>
<div class="a t" style="top:267px;font-size:20px;line-height:20px;color:#ff3333;font-weight:700;left:629px;width:600px;text-align:center;">1</div>
<svg class="a" style="left:937px;top:273.0px;" width="6" height="10" viewBox="0 0 6 10"><path d="M0.5 0 L6 4.7 L0.5 9.4 Z" fill="#b80000"/></svg>
<div class="a t" style="top:300px;font-size:16px;line-height:16px;color:#fff;font-weight:700;left:184px;width:600px;text-align:center;">L</div>
<div class="a" style="left:504px;top:294px;width:374px;height:26px;background:#33200e;"></div>
<div class="a t" style="top:301px;font-size:16px;line-height:16px;color:#ff9033;letter-spacing:0.55px;left:509.5px;">3C<span style="letter-spacing:0">/</span><svg width="17" height="16" viewBox="0 0 17 16" style="vertical-align:-2.5px;margin:0 6px 0 1px"><ellipse cx="8.5" cy="8" rx="7.6" ry="3.3" fill="none" stroke="#ff9033" stroke-width="1.3"/><ellipse cx="8.5" cy="8" rx="3.3" ry="7.4" fill="none" stroke="#ff9033" stroke-width="1.3"/></svg>MULTI-CANNON</div>
<svg class="a" style="left:857.2px;top:298.2px;" width="16" height="16" viewBox="0 0 16 16"><path d="M8 0.9 L15 4.6 L15 11.1 L8 14.9 L1 11.1 L1 4.6 Z" fill="none" stroke="#ff9033" stroke-width="1.5"/><circle cx="8" cy="7.9" r="2.9" fill="none" stroke="#ff9033" stroke-width="1.6"/></svg>
<svg class="a" style="left:888px;top:296.6px;" width="19" height="19" viewBox="0 0 19 19"><path d="M5 1 L1 1 L1 18 L5 18 M14 1 L18 1 L18 18 L14 18" fill="none" stroke="#ff3333" stroke-width="1.8"/><rect x="5" y="5" width="9" height="9" fill="#ff3333"/></svg>
<svg class="a" style="left:915px;top:301.0px;" width="6" height="10" viewBox="0 0 6 10"><path d="M5.5 0 L0 4.7 L5.5 9.4 Z" fill="#b80000"/></svg>
<div class="a t" style="top:295px;font-size:20px;line-height:20px;color:#ff3333;font-weight:700;left:629px;width:600px;text-align:center;">1</div>
<svg class="a" style="left:937px;top:301.0px;" width="6" height="10" viewBox="0 0 6 10"><path d="M0.5 0 L6 4.7 L0.5 9.4 Z" fill="#b80000"/></svg>
<div class="a t" style="top:328px;font-size:16px;line-height:16px;color:#fff;font-weight:700;left:184px;width:600px;text-align:center;">M</div>
<div class="a" style="left:504px;top:322px;width:374px;height:26px;background:#33200e;"></div>
<div class="a t" style="top:329px;font-size:16px;line-height:16px;color:#ff9033;letter-spacing:0.55px;left:509.5px;">2F<span style="letter-spacing:0">/</span><svg width="17" height="16" viewBox="0 0 17 16" style="vertical-align:-2.5px;margin:0 6px 0 1px"><ellipse cx="8.5" cy="8" rx="7.6" ry="3.3" fill="none" stroke="#ff9033" stroke-width="1.3"/><ellipse cx="8.5" cy="8" rx="3.3" ry="7.4" fill="none" stroke="#ff9033" stroke-width="1.3"/></svg>MULTI-CANNON</div>
<svg class="a" style="left:857.2px;top:326.2px;" width="16" height="16" viewBox="0 0 16 16"><path d="M8 0.9 L15 4.6 L15 11.1 L8 14.9 L1 11.1 L1 4.6 Z" fill="none" stroke="#ff9033" stroke-width="1.5"/><circle cx="8" cy="7.9" r="2.9" fill="none" stroke="#ff9033" stroke-width="1.6"/></svg>
<svg class="a" style="left:888px;top:324.6px;" width="19" height="19" viewBox="0 0 19 19"><path d="M5 1 L1 1 L1 18 L5 18 M14 1 L18 1 L18 18 L14 18" fill="none" stroke="#ff3333" stroke-width="1.8"/><rect x="5" y="5" width="9" height="9" fill="#ff3333"/></svg>
<svg class="a" style="left:915px;top:329.0px;" width="6" height="10" viewBox="0 0 6 10"><path d="M5.5 0 L0 4.7 L5.5 9.4 Z" fill="#b80000"/></svg>
<div class="a t" style="top:323px;font-size:20px;line-height:20px;color:#ff3333;font-weight:700;left:629px;width:600px;text-align:center;">1</div>
<svg class="a" style="left:937px;top:329.0px;" width="6" height="10" viewBox="0 0 6 10"><path d="M0.5 0 L6 4.7 L0.5 9.4 Z" fill="#b80000"/></svg>
<div class="a t" style="top:356px;font-size:16px;line-height:16px;color:#fff;font-weight:700;left:184px;width:600px;text-align:center;">M</div>
<div class="a" style="left:504px;top:350px;width:374px;height:26px;background:#33200e;"></div>
<div class="a t" style="top:357px;font-size:16px;line-height:16px;color:#ff9033;letter-spacing:0.55px;left:509.5px;">2F<span style="letter-spacing:0">/</span><svg width="17" height="16" viewBox="0 0 17 16" style="vertical-align:-2.5px;margin:0 6px 0 1px"><ellipse cx="8.5" cy="8" rx="7.6" ry="3.3" fill="none" stroke="#ff9033" stroke-width="1.3"/><ellipse cx="8.5" cy="8" rx="3.3" ry="7.4" fill="none" stroke="#ff9033" stroke-width="1.3"/></svg>MULTI-CANNON</div>
<svg class="a" style="left:857.2px;top:354.2px;" width="16" height="16" viewBox="0 0 16 16"><path d="M8 0.9 L15 4.6 L15 11.1 L8 14.9 L1 11.1 L1 4.6 Z" fill="none" stroke="#ff9033" stroke-width="1.5"/><circle cx="8" cy="7.9" r="2.9" fill="none" stroke="#ff9033" stroke-width="1.6"/></svg>
<svg class="a" style="left:888px;top:352.6px;" width="19" height="19" viewBox="0 0 19 19"><path d="M5 1 L1 1 L1 18 L5 18 M14 1 L18 1 L18 18 L14 18" fill="none" stroke="#ff3333" stroke-width="1.8"/><rect x="5" y="5" width="9" height="9" fill="#ff3333"/></svg>
<svg class="a" style="left:915px;top:357.0px;" width="6" height="10" viewBox="0 0 6 10"><path d="M5.5 0 L0 4.7 L5.5 9.4 Z" fill="#b80000"/></svg>
<div class="a t" style="top:351px;font-size:20px;line-height:20px;color:#ff3333;font-weight:700;left:629px;width:600px;text-align:center;">1</div>
<svg class="a" style="left:937px;top:357.0px;" width="6" height="10" viewBox="0 0 6 10"><path d="M0.5 0 L6 4.7 L0.5 9.4 Z" fill="#b80000"/></svg>
<div class="a" style="left:468px;top:386px;width:479px;height:24px;background:#b4b4b4;"></div>
<div class="a t" style="top:390px;font-size:16.5px;line-height:16.5px;color:#000;font-weight:700;letter-spacing:-0.35px;left:504px;">CORE INTERNAL</div>
<div class="a t" style="top:418px;font-size:16px;line-height:16px;color:#fff;font-weight:700;left:184px;width:600px;text-align:center;">1</div>
<div class="a" style="left:504px;top:412px;width:374px;height:26px;background:#33200e;"></div>
<div class="a t" style="top:419px;font-size:16px;line-height:16px;color:#ff9033;letter-spacing:0.55px;left:509.5px;">1A MILITARY GRADE COMPOSITE</div>
<div class="a t" style="top:446px;font-size:16px;line-height:16px;color:#fff;font-weight:700;left:184px;width:600px;text-align:center;">6</div>
<div class="a" style="left:504px;top:440px;width:374px;height:26px;background:#ff9033;"></div>
<div class="a t" style="top:447px;font-size:16px;line-height:16px;color:#111;letter-spacing:0.55px;left:509.5px;">6A POWER PLANT</div>
<div class="a t" style="top:474px;font-size:16px;line-height:16px;color:#fff;font-weight:700;left:184px;width:600px;text-align:center;">6</div>
<div class="a" style="left:504px;top:468px;width:374px;height:26px;background:#33200e;"></div>
<div class="a t" style="top:475px;font-size:16px;line-height:16px;color:#ff9033;letter-spacing:0.55px;left:509.5px;">6A THRUSTERS</div>
<svg class="a" style="left:857.2px;top:472.2px;" width="16" height="16" viewBox="0 0 16 16"><path d="M8 0.9 L15 4.6 L15 11.1 L8 14.9 L1 11.1 L1 4.6 Z" fill="none" stroke="#ff9033" stroke-width="1.5"/><circle cx="8" cy="7.9" r="2.9" fill="none" stroke="#ff9033" stroke-width="1.6"/></svg>
<svg class="a" style="left:888px;top:470.6px;" width="19" height="19" viewBox="0 0 19 19"><path d="M5 1 L1 1 L1 18 L5 18 M14 1 L18 1 L18 18 L14 18" fill="none" stroke="#ff9033" stroke-width="1.8"/><rect x="5" y="5" width="9" height="9" fill="#ff9033"/></svg>
<svg class="a" style="left:915px;top:475.0px;" width="6" height="10" viewBox="0 0 6 10"><path d="M5.5 0 L0 4.7 L5.5 9.4 Z" fill="#b80000"/></svg>
<div class="a t" style="top:469px;font-size:20px;line-height:20px;color:#ff3333;font-weight:700;left:629px;width:600px;text-align:center;">1</div>
<svg class="a" style="left:937px;top:475.0px;" width="6" height="10" viewBox="0 0 6 10"><path d="M0.5 0 L6 4.7 L0.5 9.4 Z" fill="#b80000"/></svg>
<div class="a t" style="top:502px;font-size:16px;line-height:16px;color:#fff;font-weight:700;left:184px;width:600px;text-align:center;">5</div>
<div class="a" style="left:504px;top:496px;width:374px;height:26px;background:#33200e;"></div>
<div class="a t" style="top:503px;font-size:16px;line-height:16px;color:#ff9033;letter-spacing:0.55px;left:509.5px;">5A FRAME SHIFT DRIVE (SCO)</div>
<svg class="a" style="left:857.2px;top:500.2px;" width="16" height="16" viewBox="0 0 16 16"><path d="M8 0.9 L15 4.6 L15 11.1 L8 14.9 L1 11.1 L1 4.6 Z" fill="none" stroke="#ff9033" stroke-width="1.5"/><circle cx="8" cy="7.9" r="2.9" fill="none" stroke="#ff9033" stroke-width="1.6"/></svg>
<svg class="a" style="left:888px;top:498.6px;" width="19" height="19" viewBox="0 0 19 19"><path d="M5 1 L1 1 L1 18 L5 18 M14 1 L18 1 L18 18 L14 18" fill="none" stroke="#ff9033" stroke-width="1.8"/><rect x="5" y="5" width="9" height="9" fill="#ff9033"/></svg>
<svg class="a" style="left:915px;top:503.0px;" width="6" height="10" viewBox="0 0 6 10"><path d="M5.5 0 L0 4.7 L5.5 9.4 Z" fill="#b80000"/></svg>
<div class="a t" style="top:497px;font-size:20px;line-height:20px;color:#ff3333;font-weight:700;left:629px;width:600px;text-align:center;">2</div>
<svg class="a" style="left:937px;top:503.0px;" width="6" height="10" viewBox="0 0 6 10"><path d="M0.5 0 L6 4.7 L0.5 9.4 Z" fill="#b80000"/></svg>
<div class="a t" style="top:530px;font-size:16px;line-height:16px;color:#fff;font-weight:700;left:184px;width:600px;text-align:center;">4</div>
<div class="a" style="left:504px;top:524px;width:374px;height:26px;background:#33200e;"></div>
<div class="a t" style="top:531px;font-size:16px;line-height:16px;color:#ff9033;letter-spacing:0.55px;left:509.5px;">4D LIFE SUPPORT</div>
<svg class="a" style="left:857.2px;top:528.2px;" width="16" height="16" viewBox="0 0 16 16"><path d="M8 0.9 L15 4.6 L15 11.1 L8 14.9 L1 11.1 L1 4.6 Z" fill="none" stroke="#ff9033" stroke-width="1.5"/><circle cx="8" cy="7.9" r="2.9" fill="none" stroke="#ff9033" stroke-width="1.6"/></svg>
<svg class="a" style="left:888px;top:526.6px;" width="19" height="19" viewBox="0 0 19 19"><path d="M5 1 L1 1 L1 18 L5 18 M14 1 L18 1 L18 18 L14 18" fill="none" stroke="#ff9033" stroke-width="1.8"/><rect x="5" y="5" width="9" height="9" fill="#ff9033"/></svg>
<svg class="a" style="left:915px;top:531.0px;" width="6" height="10" viewBox="0 0 6 10"><path d="M5.5 0 L0 4.7 L5.5 9.4 Z" fill="#b80000"/></svg>
<div class="a t" style="top:525px;font-size:20px;line-height:20px;color:#ff3333;font-weight:700;left:629px;width:600px;text-align:center;">1</div>
<svg class="a" style="left:937px;top:531.0px;" width="6" height="10" viewBox="0 0 6 10"><path d="M0.5 0 L6 4.7 L0.5 9.4 Z" fill="#b80000"/></svg>
<div class="a t" style="top:558px;font-size:16px;line-height:16px;color:#fff;font-weight:700;left:184px;width:600px;text-align:center;">6</div>
<div class="a" style="left:504px;top:552px;width:374px;height:26px;background:#33200e;"></div>
<div class="a t" style="top:559px;font-size:16px;line-height:16px;color:#ff9033;letter-spacing:0.55px;left:509.5px;">5A POWER DISTRIBUTOR</div>
<svg class="a" style="left:857.2px;top:556.2px;" width="16" height="16" viewBox="0 0 16 16"><path d="M8 0.9 L15 4.6 L15 11.1 L8 14.9 L1 11.1 L1 4.6 Z" fill="none" stroke="#ff9033" stroke-width="1.5"/><circle cx="8" cy="7.9" r="2.9" fill="none" stroke="#ff9033" stroke-width="1.6"/></svg>
<svg class="a" style="left:888px;top:554.6px;" width="19" height="19" viewBox="0 0 19 19"><path d="M5 1 L1 1 L1 18 L5 18 M14 1 L18 1 L18 18 L14 18" fill="none" stroke="#ff9033" stroke-width="1.8"/><rect x="5" y="5" width="9" height="9" fill="#ff9033"/></svg>
<svg class="a" style="left:915px;top:559.0px;" width="6" height="10" viewBox="0 0 6 10"><path d="M5.5 0 L0 4.7 L5.5 9.4 Z" fill="#b80000"/></svg>
<div class="a t" style="top:553px;font-size:20px;line-height:20px;color:#ff3333;font-weight:700;left:629px;width:600px;text-align:center;">1</div>
<svg class="a" style="left:937px;top:559.0px;" width="6" height="10" viewBox="0 0 6 10"><path d="M0.5 0 L6 4.7 L0.5 9.4 Z" fill="#b80000"/></svg>
<div class="a t" style="top:586px;font-size:16px;line-height:16px;color:#fff;font-weight:700;left:184px;width:600px;text-align:center;">5</div>
<div class="a" style="left:504px;top:580px;width:374px;height:26px;background:#33200e;"></div>
<div class="a t" style="top:587px;font-size:16px;line-height:16px;color:#ff9033;letter-spacing:0.55px;left:509.5px;">5D SENSORS</div>
<svg class="a" style="left:857.2px;top:584.2px;" width="16" height="16" viewBox="0 0 16 16"><path d="M8 0.9 L15 4.6 L15 11.1 L8 14.9 L1 11.1 L1 4.6 Z" fill="none" stroke="#ff9033" stroke-width="1.5"/><circle cx="8" cy="7.9" r="2.9" fill="none" stroke="#ff9033" stroke-width="1.6"/></svg>
<svg class="a" style="left:888px;top:582.6px;" width="19" height="19" viewBox="0 0 19 19"><path d="M5 1 L1 1 L1 18 L5 18 M14 1 L18 1 L18 18 L14 18" fill="none" stroke="#ff9033" stroke-width="1.8"/><rect x="5" y="5" width="9" height="9" fill="#ff9033"/></svg>
<svg class="a" style="left:915px;top:587.0px;" width="6" height="10" viewBox="0 0 6 10"><path d="M5.5 0 L0 4.7 L5.5 9.4 Z" fill="#b80000"/></svg>
<div class="a t" style="top:581px;font-size:20px;line-height:20px;color:#ff3333;font-weight:700;left:629px;width:600px;text-align:center;">1</div>
<svg class="a" style="left:937px;top:587.0px;" width="6" height="10" viewBox="0 0 6 10"><path d="M0.5 0 L6 4.7 L0.5 9.4 Z" fill="#b80000"/></svg>
<div class="a t" style="top:614px;font-size:16px;line-height:16px;color:#fff;font-weight:700;left:184px;width:600px;text-align:center;">4</div>
<div class="a" style="left:504px;top:608px;width:374px;height:26px;background:#33200e;"></div>
<div class="a t" style="top:615px;font-size:16px;line-height:16px;color:#ff9033;letter-spacing:0.55px;left:509.5px;">4C FUEL TANK (CAP: 16)</div>
<div class="a" style="left:957px;top:110px;width:479px;height:2px;background:#e0700f;"></div>
<div class="a" style="left:957px;top:137px;width:479px;height:2px;background:#e0700f;"></div>
<div class="a t" style="top:117px;font-size:17px;line-height:17px;color:#ddd;font-weight:700;letter-spacing:-0.8px;left:961.5px;"><span style="display:inline-block;border-bottom:1px dotted #ddd;padding-bottom:0px">CL</span></div>
<div class="a t" style="top:117px;font-size:17px;line-height:17px;color:#ddd;font-weight:700;letter-spacing:-0.4px;left:993px;">MODULE</div>
<div class="a t" style="top:117px;font-size:17px;line-height:17px;color:#ddd;font-weight:700;right:481.00px;text-align:right;"><span style="display:inline-block;border-bottom:1px dotted #ddd;padding-bottom:0px">PWR</span></div>
<div class="a" style="left:993px;top:148px;width:374px;height:26px;background:#33200e;"></div>
<div class="a t" style="top:155px;font-size:16px;line-height:16px;color:#ff9033;letter-spacing:0.55px;left:998.5px;">1H CARGO HATCH</div>
<svg class="a" style="left:1377px;top:150.6px;" width="19" height="19" viewBox="0 0 19 19"><path d="M5 1 L1 1 L1 18 L5 18 M14 1 L18 1 L18 18 L14 18" fill="none" stroke="#ff9033" stroke-width="1.8"/><rect x="5" y="5" width="9" height="9" fill="#ff9033"/></svg>
<svg class="a" style="left:1404px;top:155.0px;" width="6" height="10" viewBox="0 0 6 10"><path d="M5.5 0 L0 4.7 L5.5 9.4 Z" fill="#b80000"/></svg>
<div class="a t" style="top:149px;font-size:20px;line-height:20px;color:#ff3333;font-weight:700;left:1118px;width:600px;text-align:center;">1</div>
<svg class="a" style="left:1426px;top:155.0px;" width="6" height="10" viewBox="0 0 6 10"><path d="M0.5 0 L6 4.7 L0.5 9.4 Z" fill="#b80000"/></svg>
<div class="a" style="left:957px;top:184px;width:479px;height:24px;background:#b4b4b4;"></div>
<div class="a t" style="top:188px;font-size:16.5px;line-height:16.5px;color:#000;font-weight:700;letter-spacing:-0.35px;left:993px;">UTILITY MOUNTS</div>
<div class="a" style="left:993px;top:210px;width:374px;height:26px;background:#33200e;"></div>
<div class="a t" style="top:217px;font-size:16px;line-height:16px;color:#ff9033;letter-spacing:0.55px;left:998.5px;">0A SHIELD BOOSTER</div>
<svg class="a" style="left:1346.2px;top:214.2px;" width="16" height="16" viewBox="0 0 16 16"><path d="M8 0.9 L15 4.6 L15 11.1 L8 14.9 L1 11.1 L1 4.6 Z" fill="none" stroke="#ff9033" stroke-width="1.5"/><circle cx="8" cy="7.9" r="2.9" fill="none" stroke="#ff9033" stroke-width="1.6"/></svg>
<svg class="a" style="left:1377px;top:212.6px;" width="19" height="19" viewBox="0 0 19 19"><path d="M5 1 L1 1 L1 18 L5 18 M14 1 L18 1 L18 18 L14 18" fill="none" stroke="#ff9033" stroke-width="1.8"/><rect x="5" y="5" width="9" height="9" fill="#ff9033"/></svg>
<svg class="a" style="left:1404px;top:217.0px;" width="6" height="10" viewBox="0 0 6 10"><path d="M5.5 0 L0 4.7 L5.5 9.4 Z" fill="#b80000"/></svg>
<div class="a t" style="top:211px;font-size:20px;line-height:20px;color:#ff3333;font-weight:700;left:1118px;width:600px;text-align:center;">1</div>
<svg class="a" style="left:1426px;top:217.0px;" width="6" height="10" viewBox="0 0 6 10"><path d="M0.5 0 L6 4.7 L0.5 9.4 Z" fill="#b80000"/></svg>
<div class="a" style="left:993px;top:238px;width:374px;height:26px;background:#33200e;"></div>
<div class="a t" style="top:245px;font-size:16px;line-height:16px;color:#ff9033;letter-spacing:0.55px;left:998.5px;">0A SHIELD BOOSTER</div>
<svg class="a" style="left:1346.2px;top:242.2px;" width="16" height="16" viewBox="0 0 16 16"><path d="M8 0.9 L15 4.6 L15 11.1 L8 14.9 L1 11.1 L1 4.6 Z" fill="none" stroke="#ff9033" stroke-width="1.5"/><circle cx="8" cy="7.9" r="2.9" fill="none" stroke="#ff9033" stroke-width="1.6"/></svg>
<svg class="a" style="left:1377px;top:240.6px;" width="19" height="19" viewBox="0 0 19 19"><path d="M5 1 L1 1 L1 18 L5 18 M14 1 L18 1 L18 18 L14 18" fill="none" stroke="#ff9033" stroke-width="1.8"/><rect x="5" y="5" width="9" height="9" fill="#ff9033"/></svg>
<svg class="a" style="left:1404px;top:245.0px;" width="6" height="10" viewBox="0 0 6 10"><path d="M5.5 0 L0 4.7 L5.5 9.4 Z" fill="#b80000"/></svg>
<div class="a t" style="top:239px;font-size:20px;line-height:20px;color:#ff3333;font-weight:700;left:1118px;width:600px;text-align:center;">1</div>
<svg class="a" style="left:1426px;top:245.0px;" width="6" height="10" viewBox="0 0 6 10"><path d="M0.5 0 L6 4.7 L0.5 9.4 Z" fill="#b80000"/></svg>
<div class="a" style="left:993px;top:266px;width:374px;height:26px;background:#33200e;"></div>
<div class="a t" style="top:273px;font-size:16px;line-height:16px;color:#ff9033;letter-spacing:0.55px;left:998.5px;">0A SHIELD BOOSTER</div>
<svg class="a" style="left:1346.2px;top:270.2px;" width="16" height="16" viewBox="0 0 16 16"><path d="M8 0.9 L15 4.6 L15 11.1 L8 14.9 L1 11.1 L1 4.6 Z" fill="none" stroke="#ff9033" stroke-width="1.5"/><circle cx="8" cy="7.9" r="2.9" fill="none" stroke="#ff9033" stroke-width="1.6"/></svg>
<svg class="a" style="left:1377px;top:268.6px;" width="19" height="19" viewBox="0 0 19 19"><path d="M5 1 L1 1 L1 18 L5 18 M14 1 L18 1 L18 18 L14 18" fill="none" stroke="#ff9033" stroke-width="1.8"/><rect x="5" y="5" width="9" height="9" fill="#ff9033"/></svg>
<svg class="a" style="left:1404px;top:273.0px;" width="6" height="10" viewBox="0 0 6 10"><path d="M5.5 0 L0 4.7 L5.5 9.4 Z" fill="#b80000"/></svg>
<div class="a t" style="top:267px;font-size:20px;line-height:20px;color:#ff3333;font-weight:700;left:1118px;width:600px;text-align:center;">1</div>
<svg class="a" style="left:1426px;top:273.0px;" width="6" height="10" viewBox="0 0 6 10"><path d="M0.5 0 L6 4.7 L0.5 9.4 Z" fill="#b80000"/></svg>
<div class="a" style="left:993px;top:294px;width:374px;height:26px;background:#33200e;"></div>
<div class="a t" style="top:301px;font-size:16px;line-height:16px;color:#ff9033;letter-spacing:0.55px;left:998.5px;">0A SHIELD BOOSTER</div>
<svg class="a" style="left:1346.2px;top:298.2px;" width="16" height="16" viewBox="0 0 16 16"><path d="M8 0.9 L15 4.6 L15 11.1 L8 14.9 L1 11.1 L1 4.6 Z" fill="none" stroke="#ff9033" stroke-width="1.5"/><circle cx="8" cy="7.9" r="2.9" fill="none" stroke="#ff9033" stroke-width="1.6"/></svg>
<svg class="a" style="left:1377px;top:296.6px;" width="19" height="19" viewBox="0 0 19 19"><path d="M5 1 L1 1 L1 18 L5 18 M14 1 L18 1 L18 18 L14 18" fill="none" stroke="#ff9033" stroke-width="1.8"/><rect x="5" y="5" width="9" height="9" fill="#ff9033"/></svg>
<svg class="a" style="left:1404px;top:301.0px;" width="6" height="10" viewBox="0 0 6 10"><path d="M5.5 0 L0 4.7 L5.5 9.4 Z" fill="#b80000"/></svg>
<div class="a t" style="top:295px;font-size:20px;line-height:20px;color:#ff3333;font-weight:700;left:1118px;width:600px;text-align:center;">1</div>
<svg class="a" style="left:1426px;top:301.0px;" width="6" height="10" viewBox="0 0 6 10"><path d="M0.5 0 L6 4.7 L0.5 9.4 Z" fill="#b80000"/></svg>
<div class="a" style="left:993px;top:322px;width:374px;height:26px;background:#33200e;"></div>
<div class="a t" style="top:329px;font-size:16px;line-height:16px;color:#ff9033;letter-spacing:0.55px;left:998.5px;">0I HEAT SINK LAUNCHER</div>
<svg class="a" style="left:1346.2px;top:326.2px;" width="16" height="16" viewBox="0 0 16 16"><path d="M8 0.9 L15 4.6 L15 11.1 L8 14.9 L1 11.1 L1 4.6 Z" fill="none" stroke="#ff9033" stroke-width="1.5"/><circle cx="8" cy="7.9" r="2.9" fill="none" stroke="#ff9033" stroke-width="1.6"/></svg>
<svg class="a" style="left:1377px;top:324.6px;" width="19" height="19" viewBox="0 0 19 19"><path d="M5 1 L1 1 L1 18 L5 18 M14 1 L18 1 L18 18 L14 18" fill="none" stroke="#ff9033" stroke-width="1.8"/><rect x="5" y="5" width="9" height="9" fill="#ff9033"/></svg>
<svg class="a" style="left:1404px;top:329.0px;" width="6" height="10" viewBox="0 0 6 10"><path d="M5.5 0 L0 4.7 L5.5 9.4 Z" fill="#b80000"/></svg>
<div class="a t" style="top:323px;font-size:20px;line-height:20px;color:#ff3333;font-weight:700;left:1118px;width:600px;text-align:center;">1</div>
<svg class="a" style="left:1426px;top:329.0px;" width="6" height="10" viewBox="0 0 6 10"><path d="M0.5 0 L6 4.7 L0.5 9.4 Z" fill="#b80000"/></svg>
<div class="a" style="left:993px;top:350px;width:374px;height:26px;background:#33200e;"></div>
<div class="a t" style="top:357px;font-size:16px;line-height:16px;color:#ff9033;letter-spacing:0.55px;left:998.5px;">0I HEAT SINK LAUNCHER</div>
<svg class="a" style="left:1346.2px;top:354.2px;" width="16" height="16" viewBox="0 0 16 16"><path d="M8 0.9 L15 4.6 L15 11.1 L8 14.9 L1 11.1 L1 4.6 Z" fill="none" stroke="#ff9033" stroke-width="1.5"/><circle cx="8" cy="7.9" r="2.9" fill="none" stroke="#ff9033" stroke-width="1.6"/></svg>
<svg class="a" style="left:1377px;top:352.6px;" width="19" height="19" viewBox="0 0 19 19"><path d="M5 1 L1 1 L1 18 L5 18 M14 1 L18 1 L18 18 L14 18" fill="none" stroke="#ff9033" stroke-width="1.8"/><rect x="5" y="5" width="9" height="9" fill="#ff9033"/></svg>
<svg class="a" style="left:1404px;top:357.0px;" width="6" height="10" viewBox="0 0 6 10"><path d="M5.5 0 L0 4.7 L5.5 9.4 Z" fill="#b80000"/></svg>
<div class="a t" style="top:351px;font-size:20px;line-height:20px;color:#ff3333;font-weight:700;left:1118px;width:600px;text-align:center;">1</div>
<svg class="a" style="left:1426px;top:357.0px;" width="6" height="10" viewBox="0 0 6 10"><path d="M0.5 0 L6 4.7 L0.5 9.4 Z" fill="#b80000"/></svg>
<div class="a" style="left:957px;top:386px;width:479px;height:24px;background:#b4b4b4;"></div>
<div class="a t" style="top:390px;font-size:16.5px;line-height:16.5px;color:#000;font-weight:700;letter-spacing:-0.35px;left:993px;">OPTIONAL INTERNAL</div>
<div class="a t" style="top:418px;font-size:16px;line-height:16px;color:#fff;font-weight:700;left:673px;width:600px;text-align:center;">6</div>
<div class="a" style="left:993px;top:412px;width:374px;height:26px;background:#33200e;"></div>
<div class="a t" style="top:419px;font-size:16px;line-height:16px;color:#ff9033;letter-spacing:0.55px;left:998.5px;">6A SHIELD GENERATOR</div>
<svg class="a" style="left:1346.2px;top:416.2px;" width="16" height="16" viewBox="0 0 16 16"><path d="M8 0.9 L15 4.6 L15 11.1 L8 14.9 L1 11.1 L1 4.6 Z" fill="none" stroke="#ff9033" stroke-width="1.5"/><circle cx="8" cy="7.9" r="2.9" fill="none" stroke="#ff9033" stroke-width="1.6"/></svg>
<svg class="a" style="left:1377px;top:414.6px;" width="19" height="19" viewBox="0 0 19 19"><path d="M5 1 L1 1 L1 18 L5 18 M14 1 L18 1 L18 18 L14 18" fill="none" stroke="#ff9033" stroke-width="1.8"/><rect x="5" y="5" width="9" height="9" fill="#ff9033"/></svg>
<svg class="a" style="left:1404px;top:419.0px;" width="6" height="10" viewBox="0 0 6 10"><path d="M5.5 0 L0 4.7 L5.5 9.4 Z" fill="#b80000"/></svg>
<div class="a t" style="top:413px;font-size:20px;line-height:20px;color:#ff3333;font-weight:700;left:1118px;width:600px;text-align:center;">1</div>
<svg class="a" style="left:1426px;top:419.0px;" width="6" height="10" viewBox="0 0 6 10"><path d="M0.5 0 L6 4.7 L0.5 9.4 Z" fill="#b80000"/></svg>
<div class="a t" style="top:446px;font-size:16px;line-height:16px;color:#fff;font-weight:700;left:673px;width:600px;text-align:center;">4</div>
<div class="a" style="left:993px;top:440px;width:374px;height:26px;background:#33200e;"></div>
<div class="a t" style="top:447px;font-size:16px;line-height:16px;color:#ff9033;letter-spacing:0.55px;left:998.5px;">4D HULL REINFORCEMENT PACKAGE</div>
<div class="a t" style="top:474px;font-size:16px;line-height:16px;color:#fff;font-weight:700;left:673px;width:600px;text-align:center;">3</div>
<div class="a" style="left:993px;top:468px;width:374px;height:26px;background:#33200e;"></div>
<div class="a t" style="top:475px;font-size:16px;line-height:16px;color:#ff9033;letter-spacing:0.55px;left:998.5px;">3D MODULE REINFORCEMENT PACKAGE</div>
<div class="a t" style="top:502px;font-size:16px;line-height:16px;color:#fff;font-weight:700;left:673px;width:600px;text-align:center;">2</div>
<div class="a" style="left:993px;top:496px;width:374px;height:26px;background:#33200e;"></div>
<div class="a t" style="top:503px;font-size:16px;line-height:16px;color:#ff9033;letter-spacing:0.55px;left:998.5px;">2D MODULE REINFORCEMENT PACKAGE</div>
<div class="a t" style="top:530px;font-size:16px;line-height:16px;color:#fff;font-weight:700;left:673px;width:600px;text-align:center;">1</div>
<div class="a" style="left:993px;top:524px;width:374px;height:26px;background:#33200e;"></div>
<div class="a t" style="top:531px;font-size:16px;line-height:16px;color:#ff9033;letter-spacing:0.55px;left:998.5px;">1E ADVANCED DOCKING COMPUTER</div>
<svg class="a" style="left:1377px;top:526.6px;" width="19" height="19" viewBox="0 0 19 19"><path d="M5 1 L1 1 L1 18 L5 18 M14 1 L18 1 L18 18 L14 18" fill="none" stroke="#ff9033" stroke-width="1.8"/><rect x="5" y="5" width="9" height="9" fill="#ff9033"/></svg>
<svg class="a" style="left:1404px;top:531.0px;" width="6" height="10" viewBox="0 0 6 10"><path d="M5.5 0 L0 4.7 L5.5 9.4 Z" fill="#b80000"/></svg>
<div class="a t" style="top:525px;font-size:20px;line-height:20px;color:#ff3333;font-weight:700;left:1118px;width:600px;text-align:center;">1</div>
<svg class="a" style="left:1426px;top:531.0px;" width="6" height="10" viewBox="0 0 6 10"><path d="M0.5 0 L6 4.7 L0.5 9.4 Z" fill="#b80000"/></svg>
<div class="a t" style="top:558px;font-size:16px;line-height:16px;color:#fff;font-weight:700;left:673px;width:600px;text-align:center;">1</div>
<div class="a" style="left:993px;top:552px;width:374px;height:26px;background:#33200e;"></div>
<div class="a t" style="top:559px;font-size:16px;line-height:16px;color:#ff9033;letter-spacing:0.55px;left:998.5px;">1E SUPERCRUISE ASSIST</div>
<svg class="a" style="left:1377px;top:554.6px;" width="19" height="19" viewBox="0 0 19 19"><path d="M5 1 L1 1 L1 18 L5 18 M14 1 L18 1 L18 18 L14 18" fill="none" stroke="#ff9033" stroke-width="1.8"/><rect x="5" y="5" width="9" height="9" fill="#ff9033"/></svg>
<svg class="a" style="left:1404px;top:559.0px;" width="6" height="10" viewBox="0 0 6 10"><path d="M5.5 0 L0 4.7 L5.5 9.4 Z" fill="#b80000"/></svg>
<div class="a t" style="top:553px;font-size:20px;line-height:20px;color:#ff3333;font-weight:700;left:1118px;width:600px;text-align:center;">1</div>
<svg class="a" style="left:1426px;top:559.0px;" width="6" height="10" viewBox="0 0 6 10"><path d="M0.5 0 L6 4.7 L0.5 9.4 Z" fill="#b80000"/></svg>
<div class="a" style="left:1458px;top:64px;width:444px;height:603px;background:#000;border:2px solid #ff9033;box-sizing:border-box;"></div>
<div class="a t" style="top:76px;font-size:18px;line-height:18px;color:#ddd;font-weight:700;letter-spacing:-0.6px;left:1470px;">6A POWER PLANT</div>
<div class="a" style="left:1470px;top:95px;width:420px;height:2px;background:#e0700f;"></div>
<div class="a" style="left:1470px;top:107px;width:95px;height:23px;background:#4d4d4d;border:1px solid #f0f0f0;box-sizing:border-box;"></div>
<div class="a t" style="top:111px;font-size:16.5px;line-height:16.5px;color:#fff;left:1476.5px;">12,971,100</div>
<div class="a t" style="top:112px;font-size:14.5px;line-height:14.5px;color:#fff;left:1569px;">CR</div>
<div class="a" style="left:1825px;top:107px;width:65px;height:23px;background:#33200e;border:1px solid #e0700f;box-sizing:border-box;"></div>
<div class="a t" style="top:111px;font-size:15px;line-height:15px;color:#ff9033;letter-spacing:-0.5px;left:1557.5px;width:600px;text-align:center;">ACTUAL</div>
<div class="a" style="left:1470px;top:135px;width:60px;height:23px;background:#33200e;border:1px solid #e0700f;box-sizing:border-box;"></div>
<div class="a t" style="top:139px;font-size:15px;line-height:15px;color:#ff9033;letter-spacing:1.2px;left:1200.6px;width:600px;text-align:center;">2.5%</div>
<div class="a" style="left:1535px;top:135px;width:48px;height:23px;background:#33200e;border:1px solid #e0700f;box-sizing:border-box;"></div>
<div class="a t" style="top:139px;font-size:15px;line-height:15px;color:#ff9033;letter-spacing:1.2px;left:1259.6px;width:600px;text-align:center;">5%</div>
<div class="a" style="left:1588px;top:135px;width:57px;height:23px;background:#33200e;border:1px solid #e0700f;box-sizing:border-box;"></div>
<div class="a t" style="top:139px;font-size:15px;line-height:15px;color:#ff9033;letter-spacing:1.2px;left:1317.1px;width:600px;text-align:center;">10%</div>
<div class="a" style="left:1650px;top:135px;width:57px;height:23px;background:#33200e;border:1px solid #e0700f;box-sizing:border-box;"></div>
<div class="a t" style="top:139px;font-size:15px;line-height:15px;color:#ff9033;letter-spacing:1.2px;left:1379.1px;width:600px;text-align:center;">15%</div>
<div class="a" style="left:1712px;top:135px;width:57px;height:23px;background:#33200e;border:1px solid #e0700f;box-sizing:border-box;"></div>
<div class="a t" style="top:139px;font-size:15px;line-height:15px;color:#ff9033;letter-spacing:1.2px;left:1441.1px;width:600px;text-align:center;">20%</div>
<div class="a" style="left:1774px;top:135px;width:57px;height:23px;background:#33200e;border:1px solid #e0700f;box-sizing:border-box;"></div>
<div class="a t" style="top:139px;font-size:15px;line-height:15px;color:#ff9033;letter-spacing:1.2px;left:1503.1px;width:600px;text-align:center;">30%</div>
<div class="a" style="left:1836px;top:135px;width:54px;height:23px;background:#33200e;border:1px solid #e0700f;box-sizing:border-box;"></div>
<div class="a t" style="top:139px;font-size:15px;line-height:15px;color:#ff9033;left:1563.0px;width:600px;text-align:center;">FREE</div>
<div class="a" style="left:1470px;top:168px;width:420px;height:2px;background:#e0700f;"></div>
<div class="a" style="left:1470px;top:184px;width:283px;height:26px;box-sizing:border-box;border:1px solid #f2f2f2;background:#4d4d4d;"></div>
<div class="a t" style="top:188px;font-size:18px;line-height:18px;color:#fff;letter-spacing:0.65px;left:1475.5px;">(No Blueprint)</div>
<svg class="a" style="left:1736px;top:193px;" width="11" height="7" viewBox="0 0 11 7"><path d="M1 1 L5.5 5.5 L10 1" fill="none" stroke="#fff" stroke-width="2"/></svg>
<svg class="a" style="left:1470px;top:214px;" width="20" height="17" viewBox="0 0 20 17"><path d="M5 1 L1 1 L1 16 L5 16 M15 1 L19 1 L19 16 L15 16" fill="none" stroke="#ff9033" stroke-width="2"/></svg>
<div class="a t" style="top:217px;font-size:14px;line-height:14px;color:#ddd;left:1489.5px;">PRE</div>
<div class="a t" style="top:217px;font-size:14px;line-height:14px;color:#ddd;letter-spacing:-0.1px;left:1583px;">GRADE</div>
<svg class="a" style="left:1642px;top:215px;" width="16" height="16" viewBox="0 0 16 16"><path d="M8 0.9 L15 4.6 L15 11.1 L8 14.9 L1 11.1 L1 4.6 Z" fill="none" stroke="#cfcfcf" stroke-width="1.5"/><circle cx="8" cy="7.9" r="2.9" fill="none" stroke="#cfcfcf" stroke-width="1.6"/></svg>
<svg class="a" style="left:1665px;top:215px;" width="16" height="16" viewBox="0 0 16 16"><path d="M8 0.9 L15 4.6 L15 11.1 L8 14.9 L1 11.1 L1 4.6 Z" fill="none" stroke="#cfcfcf" stroke-width="1.5"/><circle cx="8" cy="7.9" r="2.9" fill="none" stroke="#cfcfcf" stroke-width="1.6"/></svg>
<svg class="a" style="left:1688px;top:215px;" width="16" height="16" viewBox="0 0 16 16"><path d="M8 0.9 L15 4.6 L15 11.1 L8 14.9 L1 11.1 L1 4.6 Z" fill="none" stroke="#cfcfcf" stroke-width="1.5"/><circle cx="8" cy="7.9" r="2.9" fill="none" stroke="#cfcfcf" stroke-width="1.6"/></svg>
<svg class="a" style="left:1711px;top:215px;" width="16" height="16" viewBox="0 0 16 16"><path d="M8 0.9 L15 4.6 L15 11.1 L8 14.9 L1 11.1 L1 4.6 Z" fill="none" stroke="#cfcfcf" stroke-width="1.5"/><circle cx="8" cy="7.9" r="2.9" fill="none" stroke="#cfcfcf" stroke-width="1.6"/></svg>
<svg class="a" style="left:1735px;top:215px;" width="16" height="16" viewBox="0 0 16 16"><path d="M8 0.9 L15 4.6 L15 11.1 L8 14.9 L1 11.1 L1 4.6 Z" fill="none" stroke="#cfcfcf" stroke-width="1.5"/><circle cx="8" cy="7.9" r="2.9" fill="none" stroke="#cfcfcf" stroke-width="1.6"/></svg>
<div class="a t" style="top:245px;font-size:18px;line-height:18px;color:#cfcfcf;letter-spacing:0.3px;left:1475.5px;">(No Experimental Effect)</div>
<svg class="a" style="left:1736px;top:253px;" width="11" height="7" viewBox="0 0 11 7"><path d="M1 1 L5.5 5.5 L10 1" fill="none" stroke="#cfcfcf" stroke-width="2"/></svg>
<div class="a" style="left:1758px;top:185px;width:80px;height:80px;box-sizing:border-box;border:10px solid #575757;border-radius:50%;"></div>
<div class="a" style="left:1843px;top:185px;width:47px;height:23px;background:#262626;"></div>
<div class="a t" style="top:189px;font-size:15px;line-height:15px;color:#cfcfcf;letter-spacing:1.2px;right:14.80px;text-align:right;">50%</div>
<div class="a" style="left:1843px;top:214px;width:47px;height:23px;background:#262626;"></div>
<div class="a t" style="top:218px;font-size:15px;line-height:15px;color:#cfcfcf;letter-spacing:1.2px;right:14.80px;text-align:right;">80%</div>
<div class="a" style="left:1843px;top:242px;width:47px;height:23px;background:#262626;"></div>
<div class="a t" style="top:246px;font-size:15px;line-height:15px;color:#cfcfcf;letter-spacing:1.2px;right:14.80px;text-align:right;">100%</div>
<div class="a" style="left:1470px;top:280px;width:420px;height:2px;background:#e0700f;"></div>
<div class="a t" style="top:300px;font-size:14px;line-height:14px;color:#ddd;letter-spacing:0.5px;left:1470px;">MASS</div>
<div class="a" style="left:1470px;top:314.5px;width:284px;height:0;border-top:1px dotted #bbb;"></div>
<div class="a t" style="top:298px;font-size:14px;line-height:14px;color:#fff;letter-spacing:0.6px;right:79.40px;text-align:right;">20</div>
<div class="a t" style="top:298px;font-size:14px;line-height:14px;color:#fff;left:1837.5px;">T</div>
<div class="a t" style="top:325px;font-size:14px;line-height:14px;color:#ddd;letter-spacing:0.5px;left:1470px;">INTEGRITY</div>
<div class="a" style="left:1470px;top:339.5px;width:284px;height:0;border-top:1px dotted #bbb;"></div>
<div class="a t" style="top:323px;font-size:14px;line-height:14px;color:#fff;letter-spacing:0.6px;right:79.40px;text-align:right;">124</div>
<div class="a t" style="top:350px;font-size:14px;line-height:14px;color:#ddd;letter-spacing:0.5px;left:1470px;">POWER CAPACITY</div>
<div class="a" style="left:1470px;top:364.9px;width:284px;height:0;border-top:1px dotted #bbb;"></div>
<div class="a t" style="top:349px;font-size:14px;line-height:14px;color:#fff;letter-spacing:0.6px;right:79.40px;text-align:right;">25.2</div>
<div class="a t" style="top:349px;font-size:14px;line-height:14px;color:#fff;left:1837.5px;">MW</div>
<div class="a t" style="top:376px;font-size:14px;line-height:14px;color:#ddd;letter-spacing:0.5px;left:1470px;">HEAT EFFICIENCY</div>
<div class="a" style="left:1470px;top:390.5px;width:284px;height:0;border-top:1px dotted #bbb;"></div>
<div class="a t" style="top:374px;font-size:14px;line-height:14px;color:#fff;letter-spacing:0.6px;right:79.40px;text-align:right;">0.4</div>
<div class="a t" style="top:374px;font-size:14px;line-height:14px;color:#fff;left:1837.5px;">/MW</div>
<div class="a" style="left:2px;top:679px;width:50px;height:41px;background:#ff9033;"></div>
<div class="a t" style="top:692px;font-size:16px;line-height:16px;color:#111;letter-spacing:0.7px;left:-272.6px;width:600px;text-align:center;"><span style="display:inline-block;border-bottom:1px dotted #111;padding-bottom:1px">TTL</span></div>
<div class="a" style="left:2px;top:725px;width:50px;height:40px;background:#ff9033;"></div>
<div class="a t" style="top:738px;font-size:16px;line-height:16px;color:#111;letter-spacing:0.7px;left:-272.6px;width:600px;text-align:center;"><span style="display:inline-block;border-bottom:1px dotted #111;padding-bottom:1px">NAV</span></div>
<div class="a" style="left:2px;top:770px;width:50px;height:41px;background:#ff9033;"></div>
<div class="a t" style="top:783px;font-size:16px;line-height:16px;color:#111;letter-spacing:0.7px;left:-272.6px;width:600px;text-align:center;"><span style="display:inline-block;border-bottom:1px dotted #111;padding-bottom:1px">HND</span></div>
<div class="a" style="left:2px;top:816px;width:50px;height:41px;background:#ff9033;"></div>
<div class="a t" style="top:829px;font-size:16px;line-height:16px;color:#111;letter-spacing:0.7px;left:-272.6px;width:600px;text-align:center;"><span style="display:inline-block;border-bottom:1px dotted #111;padding-bottom:1px">THM</span></div>
<div class="a" style="left:1849px;top:679px;width:53px;height:41px;background:#ff9033;"></div>
<div class="a t" style="top:692px;font-size:16px;line-height:16px;color:#111;letter-spacing:0.7px;left:1575.9px;width:600px;text-align:center;"><span style="display:inline-block;border-bottom:1px dotted #111;padding-bottom:1px">SHD</span></div>
<div class="a" style="left:1849px;top:725px;width:53px;height:40px;background:#ff9033;"></div>
<div class="a t" style="top:738px;font-size:16px;line-height:16px;color:#111;letter-spacing:0.7px;left:1575.9px;width:600px;text-align:center;"><span style="display:inline-block;border-bottom:1px dotted #111;padding-bottom:1px">ARM</span></div>
<div class="a" style="left:1849px;top:770px;width:53px;height:41px;background:#ff9033;"></div>
<div class="a t" style="top:783px;font-size:16px;line-height:16px;color:#111;letter-spacing:0.7px;left:1575.9px;width:600px;text-align:center;"><span style="display:inline-block;border-bottom:1px dotted #111;padding-bottom:1px">WPN</span></div>
<div class="a" style="left:1849px;top:816px;width:53px;height:44px;background:#33200e;border:1px solid #e0700f;box-sizing:border-box;"></div>
<div class="a t" style="top:829px;font-size:16px;line-height:16px;color:#ff9033;letter-spacing:0.7px;left:1575.9px;width:600px;text-align:center;"><span style="display:inline-block;border-bottom:1px dotted #ff9033;padding-bottom:1px">PRC</span></div>
<div class="a" style="left:116px;top:679px;width:1668px;height:176px;background:#ff9033;"></div>
<div class="a" style="left:118px;top:681px;width:290px;height:172px;background:#000;"></div>
<div class="a" style="left:118px;top:681px;width:51px;height:24px;background:#ff9033;"></div>
<div class="a" style="left:410px;top:681px;width:294px;height:172px;background:#000;"></div>
<div class="a" style="left:408px;top:681px;width:50px;height:24px;background:#ff9033;"></div>
<div class="a" style="left:706px;top:681px;width:231px;height:172px;background:#000;"></div>
<div class="a" style="left:704px;top:681px;width:49px;height:24px;background:#ff9033;"></div>
<div class="a" style="left:939px;top:681px;width:113px;height:172px;background:#000;"></div>
<div class="a" style="left:937px;top:681px;width:50px;height:24px;background:#ff9033;"></div>
<div class="a" style="left:1054px;top:681px;width:268px;height:172px;background:#000;"></div>
<div class="a" style="left:1052px;top:681px;width:51px;height:24px;background:#ff9033;"></div>
<div class="a" style="left:1324px;top:681px;width:232px;height:172px;background:#000;"></div>
<div class="a" style="left:1322px;top:681px;width:50px;height:24px;background:#ff9033;"></div>
<div class="a" style="left:1558px;top:681px;width:224px;height:172px;background:#000;"></div>
<div class="a" style="left:1556px;top:681px;width:53px;height:24px;background:#ff9033;"></div>
<div class="a t" style="top:685px;font-size:17px;line-height:17px;color:#111;font-weight:700;letter-spacing:-0.3px;right:1741.30px;text-align:right;">TTL</div>
<div class="a t" style="top:685px;font-size:17px;line-height:17px;color:#ff9033;font-weight:700;letter-spacing:-0.3px;left:-94.0px;width:600px;text-align:center;"><span style="display:inline-block;border-bottom:1px dotted #ff9033;padding-bottom:0px">MASS</span></div>
<div class="a t" style="top:685px;font-size:17px;line-height:17px;color:#ff9033;font-weight:700;letter-spacing:-0.3px;left:-30.0px;width:600px;text-align:center;"><span style="display:inline-block;border-bottom:1px dotted #ff9033;padding-bottom:0px">FUEL</span></div>
<div class="a t" style="top:685px;font-size:17px;line-height:17px;color:#ff9033;font-weight:700;letter-spacing:-0.3px;left:25.0px;width:600px;text-align:center;"><span style="display:inline-block;border-bottom:1px dotted #ff9033;padding-bottom:0px">CRGO</span></div>
<div class="a t" style="top:685px;font-size:17px;line-height:17px;color:#ff9033;font-weight:700;letter-spacing:-0.3px;left:80.5px;width:600px;text-align:center;"><span style="display:inline-block;border-bottom:1px dotted #ff9033;padding-bottom:0px">PSGR</span></div>
<div class="a t" style="top:710px;font-size:17px;line-height:17px;color:#ff9033;font-weight:700;letter-spacing:-0.3px;right:1741.30px;text-align:right;"><span style="display:inline-block;border-bottom:1px dotted #ff9033;padding-bottom:0px">CUR</span></div>
<div class="a t" style="top:735px;font-size:17px;line-height:17px;color:#ff9033;font-weight:700;letter-spacing:-0.3px;right:1741.30px;text-align:right;"><span style="display:inline-block;border-bottom:1px dotted #ff9033;padding-bottom:0px">MAX</span></div>
<div class="a t" style="top:759px;font-size:17px;line-height:17px;color:#ff9033;font-weight:700;letter-spacing:-0.3px;right:1741.30px;text-align:right;"><span style="display:inline-block;border-bottom:1px dotted #ff9033;padding-bottom:0px">CRW</span></div>
<div class="a t" style="top:784px;font-size:17px;line-height:17px;color:#ff9033;font-weight:700;letter-spacing:-0.3px;right:1741.30px;text-align:right;"><span style="display:inline-block;border-bottom:1px dotted #ff9033;padding-bottom:0px">DST</span></div>
<div class="a t" style="top:809px;font-size:17px;line-height:17px;color:#ff9033;font-weight:700;letter-spacing:-0.3px;right:1741.30px;text-align:right;"><span style="display:inline-block;border-bottom:1px dotted #ff9033;padding-bottom:0px">RET</span></div>
<div class="a t" style="top:833px;font-size:17px;line-height:17px;color:#ff9033;font-weight:700;letter-spacing:-0.3px;right:1741.30px;text-align:right;"><span style="display:inline-block;border-bottom:1px dotted #ff9033;padding-bottom:0px">DEP</span></div>
<div class="a t" style="top:710px;font-size:17px;line-height:17px;color:#fff;letter-spacing:0.75px;right:1666.25px;text-align:right;">783.2</div>
<div class="a" style="left:248px;top:707px;width:44px;height:23px;background:#4d4d4d;border:1px solid #f0f0f0;box-sizing:border-box;"></div>
<div class="a t" style="top:710px;font-size:17px;line-height:17px;color:#fff;letter-spacing:0.5px;right:1616.00px;text-align:right;">16</div>
<div class="a" style="left:304px;top:707px;width:44px;height:23px;background:#4d4d4d;border:1px solid #f0f0f0;box-sizing:border-box;"></div>
<div class="a t" style="top:710px;font-size:17px;line-height:17px;color:#fff;right:1560.50px;text-align:right;">0</div>
<div class="a t" style="top:735px;font-size:17px;line-height:17px;color:#fff;letter-spacing:0.75px;right:1666.25px;text-align:right;">782.4</div>
<div class="a t" style="top:735px;font-size:17px;line-height:17px;color:#fff;letter-spacing:0.75px;right:1613.25px;text-align:right;">16</div>
<div class="a t" style="top:735px;font-size:17px;line-height:17px;color:#fff;letter-spacing:0.75px;right:1556.25px;text-align:right;">0</div>
<div class="a t" style="top:735px;font-size:17px;line-height:17px;color:#fff;letter-spacing:0.75px;right:1501.25px;text-align:right;">0</div>
<div class="a" style="left:207px;top:755px;width:6px;height:6px;border-radius:50%;background:#33bbee;"></div>
<div class="a" style="left:258px;top:755px;width:6px;height:6px;border-radius:50%;background:#0b3f55;"></div>
<div class="a" style="left:310px;top:755px;width:6px;height:6px;border-radius:50%;background:#0b3f55;"></div>
<div class="a" style="left:363px;top:755px;width:6px;height:6px;border-radius:50%;background:#0b3f55;"></div>
<div class="a t" style="top:766px;font-size:11.5px;line-height:11.5px;color:#ff9033;left:-90px;width:600px;text-align:center;">AVL</div>
<div class="a t" style="top:766px;font-size:11.5px;line-height:11.5px;color:#ff9033;left:-39px;width:600px;text-align:center;">SYS</div>
<div class="a t" style="top:766px;font-size:11.5px;line-height:11.5px;color:#ff9033;left:13px;width:600px;text-align:center;">ENG</div>
<div class="a t" style="top:766px;font-size:11.5px;line-height:11.5px;color:#ff9033;left:66px;width:600px;text-align:center;">WEP</div>
<div class="a" style="left:246.7px;top:780px;width:6px;height:6px;border-radius:50%;background:#ff9033;"></div>
<div class="a" style="left:254.3px;top:780px;width:6px;height:6px;border-radius:50%;background:#ff9033;"></div>
<div class="a" style="left:261.9px;top:780px;width:6px;height:6px;border-radius:50%;background:#3a2410;"></div>
<div class="a" style="left:269.5px;top:780px;width:6px;height:6px;border-radius:50%;background:#3a2410;"></div>
<div class="a" style="left:298.7px;top:780px;width:6px;height:6px;border-radius:50%;background:#ff9033;"></div>
<div class="a" style="left:306.3px;top:780px;width:6px;height:6px;border-radius:50%;background:#ff9033;"></div>
<div class="a" style="left:313.9px;top:780px;width:6px;height:6px;border-radius:50%;background:#3a2410;"></div>
<div class="a" style="left:321.5px;top:780px;width:6px;height:6px;border-radius:50%;background:#3a2410;"></div>
<div class="a" style="left:351.7px;top:780px;width:6px;height:6px;border-radius:50%;background:#ff9033;"></div>
<div class="a" style="left:359.3px;top:780px;width:6px;height:6px;border-radius:50%;background:#ff9033;"></div>
<div class="a" style="left:366.9px;top:780px;width:6px;height:6px;border-radius:50%;background:#3a2410;"></div>
<div class="a" style="left:374.5px;top:780px;width:6px;height:6px;border-radius:50%;background:#3a2410;"></div>
<div class="a t" style="top:790px;font-size:11.5px;line-height:11.5px;color:#ff9033;left:-39px;width:600px;text-align:center;">SYS</div>
<div class="a t" style="top:790px;font-size:11.5px;line-height:11.5px;color:#ff9033;left:13px;width:600px;text-align:center;">ENG</div>
<div class="a t" style="top:790px;font-size:11.5px;line-height:11.5px;color:#ff9033;left:66px;width:600px;text-align:center;">WEP</div>
<svg class="a" style="left:195px;top:786px;" width="30" height="19" viewBox="0 0 30 19"><path d="M0.5 4 L0.5 0.5 L29.5 0.5 L29.5 4 M0.5 15 L0.5 18.5 L29.5 18.5 L29.5 15" fill="none" stroke="#ff9033" stroke-width="1.2"/></svg>
<div class="a t" style="top:790px;font-size:11.5px;line-height:11.5px;color:#ff9033;left:-90px;width:600px;text-align:center;">RST</div>
<div class="a t" style="top:809px;font-size:17px;line-height:17px;color:#fff;letter-spacing:0.75px;right:1666.25px;text-align:right;"><span style="display:inline-block;border-bottom:1px dotted #fff;padding-bottom:0px">91.5%</span></div>
<div class="a t" style="top:833px;font-size:17px;line-height:17px;color:#ff2a2a;letter-spacing:0.75px;right:1666.25px;text-align:right;"><span style="display:inline-block;border-bottom:1px dotted #ff2a2a;padding-bottom:0px">112.1%</span></div>
<div class="a" style="left:243px;top:807px;width:126px;height:19px;background:#f57300;"></div>
<div class="a" style="left:369px;top:807px;width:6px;height:19px;background:#c45a00;"></div>
<div class="a" style="left:375px;top:807px;width:11px;height:19px;background:#4a2a08;"></div>
<div class="a" style="left:386px;top:807px;width:17px;height:19px;background:#700808;"></div>
<div class="a" style="left:243px;top:832px;width:160px;height:19px;background:#ee0000;"></div>
<div class="a" style="left:400px;top:832px;width:3px;height:19px;background:#b00000;"></div>
<div class="a" style="left:300px;top:805px;width:1px;height:48px;background:#33bbee;"></div>
<div class="a" style="left:314px;top:805px;width:1px;height:48px;background:#44dd88;"></div>
<div class="a" style="left:386px;top:805px;width:1px;height:48px;background:#ff4444;"></div>
<div class="a t" style="top:810px;font-size:12.5px;line-height:12.5px;color:#111;font-weight:700;left:302.5px;">1</div>
<div class="a t" style="top:835px;font-size:12.5px;line-height:12.5px;color:#111;font-weight:700;left:317.5px;">1</div>
<div class="a t" style="top:685px;font-size:17px;line-height:17px;color:#111;font-weight:700;letter-spacing:-0.3px;right:1452.30px;text-align:right;">NAV</div>
<div class="a t" style="top:685px;font-size:17px;line-height:17px;color:#ff9033;font-weight:700;letter-spacing:-0.3px;left:186.0px;width:600px;text-align:center;"><span style="display:inline-block;border-bottom:1px dotted #ff9033;padding-bottom:0px">JMP</span></div>
<div class="a t" style="top:685px;font-size:17px;line-height:17px;color:#ff9033;font-weight:700;letter-spacing:-0.3px;left:244.0px;width:600px;text-align:center;"><span style="display:inline-block;border-bottom:1px dotted #ff9033;padding-bottom:0px">RNG</span></div>
<div class="a t" style="top:685px;font-size:17px;line-height:17px;color:#ff9033;font-weight:700;letter-spacing:-0.3px;left:295.0px;width:600px;text-align:center;"><span style="display:inline-block;border-bottom:1px dotted #ff9033;padding-bottom:0px">SPD</span></div>
<div class="a t" style="top:685px;font-size:17px;line-height:17px;color:#ff9033;font-weight:700;letter-spacing:-0.3px;left:338.0px;width:600px;text-align:center;"><span style="display:inline-block;border-bottom:1px dotted #ff9033;padding-bottom:0px">BST</span></div>
<div class="a t" style="top:685px;font-size:17px;line-height:17px;color:#ff9033;font-weight:700;letter-spacing:-0.3px;left:381.5px;width:600px;text-align:center;"><span style="display:inline-block;border-bottom:1px dotted #ff9033;padding-bottom:0px">FRQ</span></div>
<div class="a t" style="top:710px;font-size:17px;line-height:17px;color:#ff9033;font-weight:700;letter-spacing:-0.3px;right:1452.30px;text-align:right;"><span style="display:inline-block;border-bottom:1px dotted #ff9033;padding-bottom:0px">CUR</span></div>
<div class="a t" style="top:735px;font-size:17px;line-height:17px;color:#ff9033;font-weight:700;letter-spacing:-0.3px;right:1452.30px;text-align:right;"><span style="display:inline-block;border-bottom:1px dotted #ff9033;padding-bottom:0px">LDN</span></div>
<div class="a t" style="top:759px;font-size:17px;line-height:17px;color:#ff9033;font-weight:700;letter-spacing:-0.3px;right:1452.30px;text-align:right;"><span style="display:inline-block;border-bottom:1px dotted #ff9033;padding-bottom:0px">UNL</span></div>
<div class="a t" style="top:784px;font-size:17px;line-height:17px;color:#ff9033;font-weight:700;letter-spacing:-0.3px;right:1452.30px;text-align:right;"><span style="display:inline-block;border-bottom:1px dotted #ff9033;padding-bottom:0px">MAX</span></div>
<div class="a t" style="top:809px;font-size:17px;line-height:17px;color:#ff9033;font-weight:700;letter-spacing:-0.3px;right:1452.30px;text-align:right;"><span style="display:inline-block;border-bottom:1px dotted #ff9033;padding-bottom:0px">SCP</span></div>
<div class="a t" style="top:710px;font-size:17px;line-height:17px;color:#fff;letter-spacing:0.75px;right:1395.25px;text-align:right;">29.42</div>
<div class="a t" style="top:710px;font-size:17px;line-height:17px;color:#fff;letter-spacing:0.75px;right:1337.25px;text-align:right;">99.39</div>
<div class="a t" style="top:710px;font-size:17px;line-height:17px;color:#fff;letter-spacing:0.75px;right:1293.25px;text-align:right;">384</div>
<div class="a t" style="top:710px;font-size:17px;line-height:17px;color:#fff;letter-spacing:0.75px;right:1250.25px;text-align:right;">557</div>
<div class="a t" style="top:710px;font-size:17px;line-height:17px;color:#fff;letter-spacing:0.75px;right:1205.75px;text-align:right;">21<span style="font-size:12px;color:#bbb;letter-spacing:0.3px">S</span></div>
<div class="a t" style="top:735px;font-size:17px;line-height:17px;color:#fff;letter-spacing:0.75px;right:1395.25px;text-align:right;">29.45</div>
<div class="a t" style="top:735px;font-size:17px;line-height:17px;color:#fff;letter-spacing:0.75px;right:1337.25px;text-align:right;">99.50</div>
<div class="a t" style="top:735px;font-size:17px;line-height:17px;color:#fff;letter-spacing:0.75px;right:1293.25px;text-align:right;">413</div>
<div class="a t" style="top:735px;font-size:17px;line-height:17px;color:#fff;letter-spacing:0.75px;right:1250.25px;text-align:right;">557</div>
<div class="a t" style="top:759px;font-size:17px;line-height:17px;color:#fff;letter-spacing:0.75px;right:1395.25px;text-align:right;">29.45</div>
<div class="a t" style="top:759px;font-size:17px;line-height:17px;color:#fff;letter-spacing:0.75px;right:1337.25px;text-align:right;">99.50</div>
<div class="a t" style="top:759px;font-size:17px;line-height:17px;color:#fff;letter-spacing:0.75px;right:1293.25px;text-align:right;">413</div>
<div class="a t" style="top:759px;font-size:17px;line-height:17px;color:#fff;letter-spacing:0.75px;right:1250.25px;text-align:right;">557</div>
<div class="a t" style="top:784px;font-size:17px;line-height:17px;color:#fff;letter-spacing:0.75px;right:1395.25px;text-align:right;">29.87</div>
<div class="a t" style="top:784px;font-size:17px;line-height:17px;color:#fff;letter-spacing:0.75px;right:1293.25px;text-align:right;">415</div>
<div class="a t" style="top:784px;font-size:17px;line-height:17px;color:#fff;letter-spacing:0.75px;right:1250.25px;text-align:right;">559</div>
<div class="a t" style="top:784px;font-size:17px;line-height:17px;color:#fff;letter-spacing:0.75px;right:1205.75px;text-align:right;">9.6<span style="font-size:12px;color:#bbb;letter-spacing:0.3px">S</span></div>
<div class="a t" style="top:812px;font-size:12.5px;line-height:12.5px;color:#aaa;letter-spacing:1.2px;right:1394.80px;text-align:right;">N/A</div>
<div class="a t" style="top:812px;font-size:12.5px;line-height:12.5px;color:#aaa;letter-spacing:1.2px;right:1336.80px;text-align:right;">N/A</div>
<div class="a t" style="top:812px;font-size:12.5px;line-height:12.5px;color:#aaa;letter-spacing:1.2px;right:1292.80px;text-align:right;">N/A</div>
<div class="a t" style="top:685px;font-size:17px;line-height:17px;color:#111;font-weight:700;letter-spacing:-0.3px;right:1157.30px;text-align:right;">HND</div>
<div class="a t" style="top:685px;font-size:17px;line-height:17px;color:#ff9033;font-weight:700;letter-spacing:-0.3px;left:482.5px;width:600px;text-align:center;"><span style="display:inline-block;border-bottom:1px dotted #ff9033;padding-bottom:0px">PIT</span></div>
<div class="a t" style="top:685px;font-size:17px;line-height:17px;color:#ff9033;font-weight:700;letter-spacing:-0.3px;left:546.0px;width:600px;text-align:center;"><span style="display:inline-block;border-bottom:1px dotted #ff9033;padding-bottom:0px">ROL</span></div>
<div class="a t" style="top:685px;font-size:17px;line-height:17px;color:#ff9033;font-weight:700;letter-spacing:-0.3px;left:608.0px;width:600px;text-align:center;"><span style="display:inline-block;border-bottom:1px dotted #ff9033;padding-bottom:0px">YAW</span></div>
<div class="a t" style="top:722px;font-size:17px;line-height:17px;color:#ff9033;font-weight:700;letter-spacing:-0.3px;right:1157.30px;text-align:right;"><span style="display:inline-block;border-bottom:1px dotted #ff9033;padding-bottom:0px">CUR</span></div>
<div class="a t" style="top:770px;font-size:17px;line-height:17px;color:#ff9033;font-weight:700;letter-spacing:-0.3px;right:1157.30px;text-align:right;"><span style="display:inline-block;border-bottom:1px dotted #ff9033;padding-bottom:0px">MAX</span></div>
<div class="a t" style="top:710px;font-size:17px;line-height:17px;color:#fff;letter-spacing:0.75px;right:1098.25px;text-align:right;">54.05</div>
<div class="a t" style="top:710px;font-size:17px;line-height:17px;color:#fff;letter-spacing:0.75px;right:1029.25px;text-align:right;">146.85</div>
<div class="a t" style="top:710px;font-size:17px;line-height:17px;color:#fff;letter-spacing:0.75px;right:973.65px;text-align:right;">20.18</div>
<div class="a t" style="top:735px;font-size:17px;line-height:17px;color:#fff;letter-spacing:0.75px;right:1098.25px;text-align:right;">3.3<span style="font-size:12px;color:#bbb;letter-spacing:0.3px">S</span></div>
<div class="a t" style="top:735px;font-size:17px;line-height:17px;color:#fff;letter-spacing:0.75px;right:1029.25px;text-align:right;">1.2<span style="font-size:12px;color:#bbb;letter-spacing:0.3px">S</span></div>
<div class="a t" style="top:735px;font-size:17px;line-height:17px;color:#fff;letter-spacing:0.75px;right:973.65px;text-align:right;">8.9<span style="font-size:12px;color:#bbb;letter-spacing:0.3px">S</span></div>
<div class="a t" style="top:759px;font-size:17px;line-height:17px;color:#fff;letter-spacing:0.75px;right:1098.25px;text-align:right;">59.71</div>
<div class="a t" style="top:759px;font-size:17px;line-height:17px;color:#fff;letter-spacing:0.75px;right:1029.25px;text-align:right;">146.85</div>
<div class="a t" style="top:759px;font-size:17px;line-height:17px;color:#fff;letter-spacing:0.75px;right:973.65px;text-align:right;">20.18</div>
<div class="a t" style="top:784px;font-size:17px;line-height:17px;color:#fff;letter-spacing:0.75px;right:1098.25px;text-align:right;">3.0<span style="font-size:12px;color:#bbb;letter-spacing:0.3px">S</span></div>
<div class="a t" style="top:784px;font-size:17px;line-height:17px;color:#fff;letter-spacing:0.75px;right:1029.25px;text-align:right;">1.2<span style="font-size:12px;color:#bbb;letter-spacing:0.3px">S</span></div>
<div class="a t" style="top:784px;font-size:17px;line-height:17px;color:#fff;letter-spacing:0.75px;right:973.65px;text-align:right;">8.9<span style="font-size:12px;color:#bbb;letter-spacing:0.3px">S</span></div>
<div class="a t" style="top:685px;font-size:17px;line-height:17px;color:#111;font-weight:700;letter-spacing:-0.3px;right:923.30px;text-align:right;">THM</div>
<div class="a t" style="top:685px;font-size:17px;line-height:17px;color:#ff9033;font-weight:700;letter-spacing:-0.3px;left:720.0px;width:600px;text-align:center;"><span style="display:inline-block;border-bottom:1px dotted #ff9033;padding-bottom:0px">LVL</span></div>
<div class="a t" style="top:710px;font-size:17px;line-height:17px;color:#ff9033;font-weight:700;letter-spacing:-0.3px;right:923.30px;text-align:right;"><span style="display:inline-block;border-bottom:1px dotted #ff9033;padding-bottom:0px">IDL</span></div>
<div class="a t" style="top:735px;font-size:17px;line-height:17px;color:#ff9033;font-weight:700;letter-spacing:-0.3px;right:923.30px;text-align:right;"><span style="display:inline-block;border-bottom:1px dotted #ff9033;padding-bottom:0px">THR</span></div>
<div class="a t" style="top:759px;font-size:17px;line-height:17px;color:#ff9033;font-weight:700;letter-spacing:-0.3px;right:923.30px;text-align:right;"><span style="display:inline-block;border-bottom:1px dotted #ff9033;padding-bottom:0px">FSD</span></div>
<div class="a t" style="top:796px;font-size:17px;line-height:17px;color:#ff9033;font-weight:700;letter-spacing:-0.3px;right:923.30px;text-align:right;"><span style="display:inline-block;border-bottom:1px dotted #ff9033;padding-bottom:0px">WEP</span></div>
<div class="a t" style="top:833px;font-size:17px;line-height:17px;color:#ff9033;font-weight:700;letter-spacing:-0.3px;right:923.30px;text-align:right;"><span style="display:inline-block;border-bottom:1px dotted #ff9033;padding-bottom:0px">SCB</span></div>
<div class="a t" style="top:710px;font-size:17px;line-height:17px;color:#fff;letter-spacing:0.75px;right:857.25px;text-align:right;"><span style="display:inline-block;border-bottom:1px dotted #fff;padding-bottom:0px">28.1%</span></div>
<div class="a t" style="top:735px;font-size:17px;line-height:17px;color:#fff;letter-spacing:0.75px;right:857.25px;text-align:right;"><span style="display:inline-block;border-bottom:1px dotted #fff;padding-bottom:0px">31.3%</span></div>
<div class="a t" style="top:759px;font-size:17px;line-height:17px;color:#fff;letter-spacing:0.75px;right:857.25px;text-align:right;"><span style="display:inline-block;border-bottom:1px dotted #fff;padding-bottom:0px">61.2%</span></div>
<div class="a t" style="top:784px;font-size:17px;line-height:17px;color:#fff;letter-spacing:0.75px;right:857.25px;text-align:right;"><span style="display:inline-block;border-bottom:1px dotted #fff;padding-bottom:0px">28.9%</span></div>
<div class="a t" style="top:809px;font-size:17px;line-height:17px;color:#fff;letter-spacing:0.75px;right:857.25px;text-align:right;"><span style="display:inline-block;border-bottom:1px dotted #fff;padding-bottom:0px">57.9%</span></div>
<div class="a t" style="top:837px;font-size:12.5px;line-height:12.5px;color:#aaa;letter-spacing:1.2px;right:856.80px;text-align:right;">N/A</div>
<div class="a t" style="top:685px;font-size:17px;line-height:17px;color:#111;font-weight:700;letter-spacing:-0.3px;right:807.80px;text-align:right;">SHD</div>
<div class="a t" style="top:685px;font-size:17px;line-height:17px;color:#ff9033;font-weight:700;letter-spacing:-0.3px;left:839.5px;width:600px;text-align:center;"><span style="display:inline-block;border-bottom:1px dotted #ff9033;padding-bottom:0px">RES</span></div>
<div class="a t" style="top:685px;font-size:17px;line-height:17px;color:#ff9033;font-weight:700;letter-spacing:-0.3px;left:912.5px;width:600px;text-align:center;"><span style="display:inline-block;border-bottom:1px dotted #ff9033;padding-bottom:0px">STR</span></div>
<div class="a t" style="top:685px;font-size:17px;line-height:17px;color:#ff9033;font-weight:700;letter-spacing:-0.3px;left:985.5px;width:600px;text-align:center;"><span style="display:inline-block;border-bottom:1px dotted #ff9033;padding-bottom:0px">RNF</span></div>
<div class="a t" style="top:710px;font-size:17px;line-height:17px;color:#ff9033;font-weight:700;letter-spacing:-0.3px;right:807.30px;text-align:right;"><span style="display:inline-block;border-bottom:1px dotted #ff9033;padding-bottom:0px">RAW</span></div>
<div class="a t" style="top:735px;font-size:17px;line-height:17px;color:#ff9033;font-weight:700;letter-spacing:-0.3px;right:807.30px;text-align:right;"><span style="display:inline-block;border-bottom:1px dotted #ff9033;padding-bottom:0px">SYS</span></div>
<div class="a t" style="top:759px;font-size:17px;line-height:17px;color:#ff9033;font-weight:700;letter-spacing:-0.3px;right:807.30px;text-align:right;"><span style="display:inline-block;border-bottom:1px dotted #ff9033;padding-bottom:0px">KIN</span></div>
<div class="a t" style="top:784px;font-size:17px;line-height:17px;color:#ff9033;font-weight:700;letter-spacing:-0.3px;right:807.30px;text-align:right;"><span style="display:inline-block;border-bottom:1px dotted #ff9033;padding-bottom:0px">THM</span></div>
<div class="a t" style="top:809px;font-size:17px;line-height:17px;color:#ff9033;font-weight:700;letter-spacing:-0.3px;right:807.30px;text-align:right;"><span style="display:inline-block;border-bottom:1px dotted #ff9033;padding-bottom:0px">EXP</span></div>
<div class="a t" style="top:833px;font-size:17px;line-height:17px;color:#ff9033;font-weight:700;letter-spacing:-0.3px;right:807.30px;text-align:right;"><span style="display:inline-block;border-bottom:1px dotted #ff9033;padding-bottom:0px">BLD</span></div>
<div class="a t" style="top:735px;font-size:17px;line-height:17px;color:#fff;letter-spacing:0.75px;right:733.65px;text-align:right;">33.3%</div>
<div class="a t" style="top:759px;font-size:17px;line-height:17px;color:#fff;letter-spacing:0.75px;right:733.65px;text-align:right;">50.4%</div>
<div class="a t" style="top:784px;font-size:17px;line-height:17px;color:#fff;letter-spacing:0.75px;right:733.65px;text-align:right;">2.8%</div>
<div class="a t" style="top:809px;font-size:17px;line-height:17px;color:#fff;letter-spacing:0.75px;right:733.65px;text-align:right;">58.7%</div>
<div class="a t" style="top:710px;font-size:17px;line-height:17px;color:#fff;letter-spacing:0.75px;right:660.25px;text-align:right;">2,293.7</div>
<div class="a t" style="top:735px;font-size:17px;line-height:17px;color:#fff;letter-spacing:0.75px;right:660.25px;text-align:right;">3,438.2</div>
<div class="a t" style="top:759px;font-size:17px;line-height:17px;color:#fff;letter-spacing:0.75px;right:660.25px;text-align:right;">6,936.1</div>
<div class="a t" style="top:784px;font-size:17px;line-height:17px;color:#fff;letter-spacing:0.75px;right:660.25px;text-align:right;">3,538.8</div>
<div class="a t" style="top:809px;font-size:17px;line-height:17px;color:#fff;letter-spacing:0.75px;right:660.25px;text-align:right;">8,323.4</div>
<div class="a t" style="top:714px;font-size:12.5px;line-height:12.5px;color:#aaa;letter-spacing:1.2px;right:587.40px;text-align:right;">N/A</div>
<div class="a t" style="top:738px;font-size:12.5px;line-height:12.5px;color:#aaa;letter-spacing:1.2px;right:587.40px;text-align:right;">N/A</div>
<div class="a t" style="top:763px;font-size:12.5px;line-height:12.5px;color:#aaa;letter-spacing:1.2px;right:587.40px;text-align:right;">N/A</div>
<div class="a t" style="top:787px;font-size:12.5px;line-height:12.5px;color:#aaa;letter-spacing:1.2px;right:587.40px;text-align:right;">N/A</div>
<div class="a t" style="top:812px;font-size:12.5px;line-height:12.5px;color:#aaa;letter-spacing:1.2px;right:587.40px;text-align:right;">N/A</div>
<div class="a t" style="top:833px;font-size:17px;line-height:17px;color:#fff;letter-spacing:0.75px;right:733.65px;text-align:right;">14<span style="font-size:12px;color:#bbb;letter-spacing:0.3px">M</span>39<span style="font-size:12px;color:#bbb;letter-spacing:0.3px">S</span></div>
<div class="a t" style="top:833px;font-size:17px;line-height:17px;color:#ff9033;font-weight:700;letter-spacing:-0.3px;right:661.30px;text-align:right;"><span style="display:inline-block;border-bottom:1px dotted #ff9033;padding-bottom:0px">RGN</span></div>
<div class="a t" style="top:833px;font-size:17px;line-height:17px;color:#fff;letter-spacing:0.75px;right:587.85px;text-align:right;">14<span style="font-size:12px;color:#bbb;letter-spacing:0.3px">M</span>47<span style="font-size:12px;color:#bbb;letter-spacing:0.3px">S</span></div>
<div class="a t" style="top:685px;font-size:17px;line-height:17px;color:#111;font-weight:700;letter-spacing:-0.3px;right:538.70px;text-align:right;">ARM</div>
<div class="a t" style="top:685px;font-size:17px;line-height:17px;color:#ff9033;font-weight:700;letter-spacing:-0.3px;left:1106.0px;width:600px;text-align:center;"><span style="display:inline-block;border-bottom:1px dotted #ff9033;padding-bottom:0px">RES</span></div>
<div class="a t" style="top:685px;font-size:17px;line-height:17px;color:#ff9033;font-weight:700;letter-spacing:-0.3px;left:1176.5px;width:600px;text-align:center;"><span style="display:inline-block;border-bottom:1px dotted #ff9033;padding-bottom:0px">INT</span></div>
<div class="a t" style="top:685px;font-size:17px;line-height:17px;color:#ff9033;font-weight:700;letter-spacing:-0.3px;left:1235.0px;width:600px;text-align:center;"><span style="display:inline-block;border-bottom:1px dotted #ff9033;padding-bottom:0px">REP</span></div>
<div class="a t" style="top:710px;font-size:17px;line-height:17px;color:#ff9033;font-weight:700;letter-spacing:-0.3px;right:538.30px;text-align:right;"><span style="display:inline-block;border-bottom:1px dotted #ff9033;padding-bottom:0px">RAW</span></div>
<div class="a t" style="top:735px;font-size:17px;line-height:17px;color:#ff9033;font-weight:700;letter-spacing:-0.3px;right:538.30px;text-align:right;"><span style="display:inline-block;border-bottom:1px dotted #ff9033;padding-bottom:0px">MRP</span></div>
<div class="a t" style="top:759px;font-size:17px;line-height:17px;color:#ff9033;font-weight:700;letter-spacing:-0.3px;right:538.30px;text-align:right;"><span style="display:inline-block;border-bottom:1px dotted #ff9033;padding-bottom:0px">KIN</span></div>
<div class="a t" style="top:784px;font-size:17px;line-height:17px;color:#ff9033;font-weight:700;letter-spacing:-0.3px;right:538.30px;text-align:right;"><span style="display:inline-block;border-bottom:1px dotted #ff9033;padding-bottom:0px">THM</span></div>
<div class="a t" style="top:809px;font-size:17px;line-height:17px;color:#ff9033;font-weight:700;letter-spacing:-0.3px;right:538.30px;text-align:right;"><span style="display:inline-block;border-bottom:1px dotted #ff9033;padding-bottom:0px">EXP</span></div>
<div class="a t" style="top:833px;font-size:17px;line-height:17px;color:#ff9033;font-weight:700;letter-spacing:-0.3px;right:538.30px;text-align:right;"><span style="display:inline-block;border-bottom:1px dotted #ff9033;padding-bottom:0px">CAU</span></div>
<div class="a t" style="top:710px;font-size:17px;line-height:17px;color:#fff;letter-spacing:0.75px;right:470.25px;text-align:right;">70</div>
<div class="a t" style="top:735px;font-size:17px;line-height:17px;color:#fff;letter-spacing:0.75px;right:470.25px;text-align:right;">84%</div>
<div class="a t" style="top:759px;font-size:17px;line-height:17px;color:#fff;letter-spacing:0.75px;right:470.25px;text-align:right;">-17.6%</div>
<div class="a t" style="top:784px;font-size:17px;line-height:17px;color:#fff;letter-spacing:0.75px;right:470.25px;text-align:right;">2.0%</div>
<div class="a t" style="top:809px;font-size:17px;line-height:17px;color:#fff;letter-spacing:0.75px;right:470.25px;text-align:right;">-37.2%</div>
<div class="a t" style="top:833px;font-size:17px;line-height:17px;color:#fff;letter-spacing:0.75px;right:470.25px;text-align:right;">0.0%</div>
<div class="a t" style="top:710px;font-size:17px;line-height:17px;color:#fff;letter-spacing:0.75px;right:396.25px;text-align:right;">1,310.0</div>
<div class="a t" style="top:735px;font-size:17px;line-height:17px;color:#fff;letter-spacing:0.75px;right:396.25px;text-align:right;">260.0</div>
<div class="a t" style="top:759px;font-size:17px;line-height:17px;color:#fff;letter-spacing:0.75px;right:396.25px;text-align:right;">1,113.9</div>
<div class="a t" style="top:784px;font-size:17px;line-height:17px;color:#fff;letter-spacing:0.75px;right:396.25px;text-align:right;">1,336.7</div>
<div class="a t" style="top:809px;font-size:17px;line-height:17px;color:#fff;letter-spacing:0.75px;right:396.25px;text-align:right;">954.8</div>
<div class="a t" style="top:833px;font-size:17px;line-height:17px;color:#fff;letter-spacing:0.75px;right:396.25px;text-align:right;">1,310.0</div>
<div class="a t" style="top:714px;font-size:12.5px;line-height:12.5px;color:#aaa;letter-spacing:1.2px;right:353.30px;text-align:right;">N/A</div>
<div class="a t" style="top:763px;font-size:12.5px;line-height:12.5px;color:#aaa;letter-spacing:1.2px;right:353.30px;text-align:right;">N/A</div>
<div class="a t" style="top:787px;font-size:12.5px;line-height:12.5px;color:#aaa;letter-spacing:1.2px;right:353.30px;text-align:right;">N/A</div>
<div class="a t" style="top:812px;font-size:12.5px;line-height:12.5px;color:#aaa;letter-spacing:1.2px;right:353.30px;text-align:right;">N/A</div>
<div class="a t" style="top:837px;font-size:12.5px;line-height:12.5px;color:#aaa;letter-spacing:1.2px;right:353.30px;text-align:right;">N/A</div>
<div class="a t" style="top:685px;font-size:17px;line-height:17px;color:#111;font-weight:700;letter-spacing:-0.3px;right:301.30px;text-align:right;">WPN</div>
<div class="a t" style="top:685px;font-size:17px;line-height:17px;color:#ff9033;font-weight:700;letter-spacing:-0.3px;left:1337.0px;width:600px;text-align:center;"><span style="display:inline-block;border-bottom:1px dotted #ff9033;padding-bottom:0px">BST</span></div>
<div class="a t" style="top:685px;font-size:17px;line-height:17px;color:#ff9033;font-weight:700;letter-spacing:-0.3px;left:1450.0px;width:600px;text-align:center;"><span style="display:inline-block;border-bottom:1px dotted #ff9033;padding-bottom:0px">DUR</span></div>
<div class="a t" style="top:710px;font-size:17px;line-height:17px;color:#ff9033;font-weight:700;letter-spacing:-0.3px;right:301.30px;text-align:right;"><span style="display:inline-block;border-bottom:1px dotted #ff9033;padding-bottom:0px">RAW</span></div>
<div class="a t" style="top:735px;font-size:17px;line-height:17px;color:#ff9033;font-weight:700;letter-spacing:-0.3px;right:301.30px;text-align:right;"><span style="display:inline-block;border-bottom:1px dotted #ff9033;padding-bottom:0px">ABS</span></div>
<div class="a t" style="top:759px;font-size:17px;line-height:17px;color:#ff9033;font-weight:700;letter-spacing:-0.3px;right:301.30px;text-align:right;"><span style="display:inline-block;border-bottom:1px dotted #ff9033;padding-bottom:0px">KIN</span></div>
<div class="a t" style="top:784px;font-size:17px;line-height:17px;color:#ff9033;font-weight:700;letter-spacing:-0.3px;right:301.30px;text-align:right;"><span style="display:inline-block;border-bottom:1px dotted #ff9033;padding-bottom:0px">THM</span></div>
<div class="a t" style="top:809px;font-size:17px;line-height:17px;color:#ff9033;font-weight:700;letter-spacing:-0.3px;right:301.30px;text-align:right;"><span style="display:inline-block;border-bottom:1px dotted #ff9033;padding-bottom:0px">EXP</span></div>
<div class="a t" style="top:833px;font-size:17px;line-height:17px;color:#ff9033;font-weight:700;letter-spacing:-0.3px;right:301.30px;text-align:right;"><span style="display:inline-block;border-bottom:1px dotted #ff9033;padding-bottom:0px">A-X</span></div>
<div class="a t" style="top:710px;font-size:17px;line-height:17px;color:#fff;letter-spacing:0.75px;right:245.25px;text-align:right;">117.6</div>
<div class="a t" style="top:735px;font-size:17px;line-height:17px;color:#fff;letter-spacing:0.75px;right:245.25px;text-align:right;">0%</div>
<div class="a t" style="top:759px;font-size:17px;line-height:17px;color:#fff;letter-spacing:0.75px;right:245.25px;text-align:right;">45%</div>
<div class="a t" style="top:784px;font-size:17px;line-height:17px;color:#fff;letter-spacing:0.75px;right:245.25px;text-align:right;">55%</div>
<div class="a t" style="top:809px;font-size:17px;line-height:17px;color:#fff;letter-spacing:0.75px;right:245.25px;text-align:right;">0%</div>
<div class="a t" style="top:833px;font-size:17px;line-height:17px;color:#fff;letter-spacing:0.75px;right:245.25px;text-align:right;">0%</div>
<div class="a t" style="top:710px;font-size:17px;line-height:17px;color:#ff9033;font-weight:700;letter-spacing:-0.3px;right:192.30px;text-align:right;"><span style="display:inline-block;border-bottom:1px dotted #ff9033;padding-bottom:0px">CUR</span></div>
<div class="a t" style="top:735px;font-size:17px;line-height:17px;color:#ff9033;font-weight:700;letter-spacing:-0.3px;right:192.30px;text-align:right;"><span style="display:inline-block;border-bottom:1px dotted #ff9033;padding-bottom:0px">MAX</span></div>
<div class="a t" style="top:759px;font-size:17px;line-height:17px;color:#ff9033;font-weight:700;letter-spacing:-0.3px;right:192.30px;text-align:right;"><span style="display:inline-block;border-bottom:1px dotted #ff9033;padding-bottom:0px">AMM</span></div>
<div class="a t" style="top:809px;font-size:17px;line-height:17px;color:#ff9033;font-weight:700;letter-spacing:-0.3px;right:192.30px;text-align:right;"><span style="display:inline-block;border-bottom:1px dotted #ff9033;padding-bottom:0px">CUR</span></div>
<div class="a t" style="top:833px;font-size:17px;line-height:17px;color:#ff9033;font-weight:700;letter-spacing:-0.3px;right:192.30px;text-align:right;"><span style="display:inline-block;border-bottom:1px dotted #ff9033;padding-bottom:0px">MAX</span></div>
<div class="a t" style="top:784px;font-size:17px;line-height:17px;color:#ff9033;font-weight:700;letter-spacing:-0.3px;left:1450px;width:600px;text-align:center;"><span style="display:inline-block;border-bottom:1px dotted #ff9033;padding-bottom:0px">SUS</span></div>
<div class="a t" style="top:710px;font-size:17px;line-height:17px;color:#fff;letter-spacing:0.75px;right:127.25px;text-align:right;">8.1<span style="font-size:12px;color:#bbb;letter-spacing:0.3px">S</span></div>
<div class="a t" style="top:735px;font-size:17px;line-height:17px;color:#fff;letter-spacing:0.75px;right:127.25px;text-align:right;">35<span style="font-size:12px;color:#bbb;letter-spacing:0.3px">S</span></div>
<div class="a t" style="top:759px;font-size:17px;line-height:17px;color:#fff;letter-spacing:0.75px;right:127.25px;text-align:right;">8<span style="font-size:12px;color:#bbb;letter-spacing:0.3px">M</span>9<span style="font-size:12px;color:#bbb;letter-spacing:0.3px">S</span></div>
<div class="a t" style="top:809px;font-size:17px;line-height:17px;color:#fff;letter-spacing:0.75px;right:127.25px;text-align:right;">34.9%</div>
<div class="a t" style="top:833px;font-size:17px;line-height:17px;color:#fff;letter-spacing:0.75px;right:127.25px;text-align:right;">74.8%</div>
</body></html>
